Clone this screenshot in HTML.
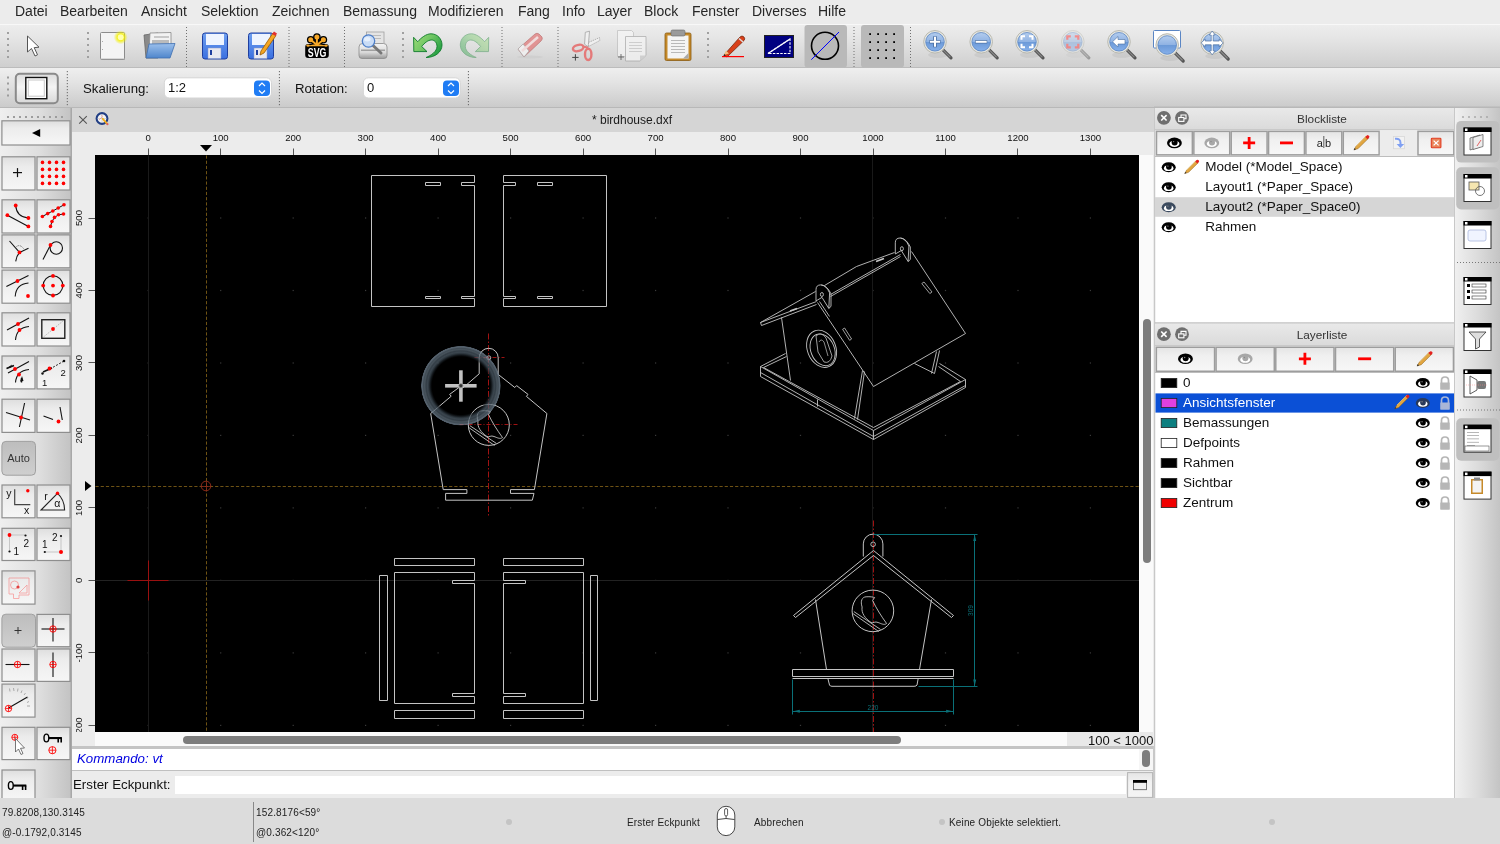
<!DOCTYPE html><html><head><meta charset="utf-8"><style>
*{margin:0;padding:0;box-sizing:border-box}
html,body{width:1500px;height:844px;overflow:hidden;background:#ececec;font-family:"Liberation Sans", sans-serif;position:relative}
.a{position:absolute}
.t{position:absolute;white-space:nowrap;line-height:1;will-change:transform}
svg text{font-family:"Liberation Sans", sans-serif}
svg{will-change:transform}
</style></head><body>
<div class="a" style="left:0;top:0;width:1500px;height:24px;background:#ececec"></div>
<div class="t" style="left:14.5px;top:3.5px;font-size:14px;color:#262626">Datei</div>
<div class="t" style="left:60px;top:3.5px;font-size:14px;color:#262626">Bearbeiten</div>
<div class="t" style="left:141px;top:3.5px;font-size:14px;color:#262626">Ansicht</div>
<div class="t" style="left:201px;top:3.5px;font-size:14px;color:#262626">Selektion</div>
<div class="t" style="left:272px;top:3.5px;font-size:14px;color:#262626">Zeichnen</div>
<div class="t" style="left:343px;top:3.5px;font-size:14px;color:#262626">Bemassung</div>
<div class="t" style="left:428px;top:3.5px;font-size:14px;color:#262626">Modifizieren</div>
<div class="t" style="left:518px;top:3.5px;font-size:14px;color:#262626">Fang</div>
<div class="t" style="left:562px;top:3.5px;font-size:14px;color:#262626">Info</div>
<div class="t" style="left:597px;top:3.5px;font-size:14px;color:#262626">Layer</div>
<div class="t" style="left:644px;top:3.5px;font-size:14px;color:#262626">Block</div>
<div class="t" style="left:692px;top:3.5px;font-size:14px;color:#262626">Fenster</div>
<div class="t" style="left:752px;top:3.5px;font-size:14px;color:#262626">Diverses</div>
<div class="t" style="left:818px;top:3.5px;font-size:14px;color:#262626">Hilfe</div>
<div class="a" style="left:0;top:24px;width:1500px;height:44px;background:linear-gradient(#ededed,#e4e4e4 35%,#cecece);border-top:1px solid #f8f8f8"></div>
<div class="a" style="left:0;top:67px;width:1500px;height:1.3px;background:#bcbcbc"></div>
<div class="a" style="left:0;top:68.3px;width:1500px;height:39px;background:linear-gradient(#efefef,#e4e4e4 35%,#cbcbcb)"></div>
<div class="a" style="left:0;top:106.5px;width:1500px;height:1.5px;background:#b8b8b8"></div>
<svg class="a" style="left:0;top:0" width="1500" height="110" viewBox="0 0 1500 110"><defs>
<linearGradient id="mg" x1="0" y1="0" x2="0" y2="1"><stop offset="0" stop-color="#b4cdee"/><stop offset="0.5" stop-color="#8fb2e3"/><stop offset="0.52" stop-color="#6c9ad8"/><stop offset="1" stop-color="#86b0ea"/></linearGradient>
<linearGradient id="flop" x1="0" y1="0" x2="0" y2="1"><stop offset="0" stop-color="#6fa0f0"/><stop offset="1" stop-color="#3a6fe0"/></linearGradient>
<radialGradient id="glow"><stop offset="0" stop-color="#ffffc0"/><stop offset="0.4" stop-color="#f5f000"/><stop offset="1" stop-color="#f0f000" stop-opacity="0"/></radialGradient>
<linearGradient id="fold" x1="0" y1="0" x2="0" y2="1"><stop offset="0" stop-color="#9cc0ec"/><stop offset="1" stop-color="#4f86cc"/></linearGradient>
<linearGradient id="grn" x1="0" y1="0" x2="1" y2="1"><stop offset="0" stop-color="#6bd06b"/><stop offset="1" stop-color="#1e8a2e"/></linearGradient>
</defs><rect x="7" y="32" width="2" height="2" fill="#a0a0a0"/><rect x="7" y="38" width="2" height="2" fill="#a0a0a0"/><rect x="7" y="44" width="2" height="2" fill="#a0a0a0"/><rect x="7" y="50" width="2" height="2" fill="#a0a0a0"/><rect x="7" y="56" width="2" height="2" fill="#a0a0a0"/><rect x="87" y="32" width="2" height="2" fill="#a0a0a0"/><rect x="87" y="38" width="2" height="2" fill="#a0a0a0"/><rect x="87" y="44" width="2" height="2" fill="#a0a0a0"/><rect x="87" y="50" width="2" height="2" fill="#a0a0a0"/><rect x="87" y="56" width="2" height="2" fill="#a0a0a0"/><rect x="186" y="27" width="1" height="1" fill="#707070"/><rect x="186" y="30" width="1" height="1" fill="#707070"/><rect x="186" y="33" width="1" height="1" fill="#707070"/><rect x="186" y="36" width="1" height="1" fill="#707070"/><rect x="186" y="39" width="1" height="1" fill="#707070"/><rect x="186" y="42" width="1" height="1" fill="#707070"/><rect x="186" y="45" width="1" height="1" fill="#707070"/><rect x="186" y="48" width="1" height="1" fill="#707070"/><rect x="186" y="51" width="1" height="1" fill="#707070"/><rect x="186" y="54" width="1" height="1" fill="#707070"/><rect x="186" y="57" width="1" height="1" fill="#707070"/><rect x="186" y="60" width="1" height="1" fill="#707070"/><rect x="186" y="63" width="1" height="1" fill="#707070"/><rect x="186" y="66" width="1" height="1" fill="#707070"/><rect x="288.5" y="27" width="1" height="1" fill="#707070"/><rect x="288.5" y="30" width="1" height="1" fill="#707070"/><rect x="288.5" y="33" width="1" height="1" fill="#707070"/><rect x="288.5" y="36" width="1" height="1" fill="#707070"/><rect x="288.5" y="39" width="1" height="1" fill="#707070"/><rect x="288.5" y="42" width="1" height="1" fill="#707070"/><rect x="288.5" y="45" width="1" height="1" fill="#707070"/><rect x="288.5" y="48" width="1" height="1" fill="#707070"/><rect x="288.5" y="51" width="1" height="1" fill="#707070"/><rect x="288.5" y="54" width="1" height="1" fill="#707070"/><rect x="288.5" y="57" width="1" height="1" fill="#707070"/><rect x="288.5" y="60" width="1" height="1" fill="#707070"/><rect x="288.5" y="63" width="1" height="1" fill="#707070"/><rect x="288.5" y="66" width="1" height="1" fill="#707070"/><rect x="344" y="27" width="1" height="1" fill="#707070"/><rect x="344" y="30" width="1" height="1" fill="#707070"/><rect x="344" y="33" width="1" height="1" fill="#707070"/><rect x="344" y="36" width="1" height="1" fill="#707070"/><rect x="344" y="39" width="1" height="1" fill="#707070"/><rect x="344" y="42" width="1" height="1" fill="#707070"/><rect x="344" y="45" width="1" height="1" fill="#707070"/><rect x="344" y="48" width="1" height="1" fill="#707070"/><rect x="344" y="51" width="1" height="1" fill="#707070"/><rect x="344" y="54" width="1" height="1" fill="#707070"/><rect x="344" y="57" width="1" height="1" fill="#707070"/><rect x="344" y="60" width="1" height="1" fill="#707070"/><rect x="344" y="63" width="1" height="1" fill="#707070"/><rect x="344" y="66" width="1" height="1" fill="#707070"/><rect x="402" y="32" width="2" height="2" fill="#a0a0a0"/><rect x="402" y="38" width="2" height="2" fill="#a0a0a0"/><rect x="402" y="44" width="2" height="2" fill="#a0a0a0"/><rect x="402" y="50" width="2" height="2" fill="#a0a0a0"/><rect x="402" y="56" width="2" height="2" fill="#a0a0a0"/><rect x="501.5" y="27" width="1" height="1" fill="#707070"/><rect x="501.5" y="30" width="1" height="1" fill="#707070"/><rect x="501.5" y="33" width="1" height="1" fill="#707070"/><rect x="501.5" y="36" width="1" height="1" fill="#707070"/><rect x="501.5" y="39" width="1" height="1" fill="#707070"/><rect x="501.5" y="42" width="1" height="1" fill="#707070"/><rect x="501.5" y="45" width="1" height="1" fill="#707070"/><rect x="501.5" y="48" width="1" height="1" fill="#707070"/><rect x="501.5" y="51" width="1" height="1" fill="#707070"/><rect x="501.5" y="54" width="1" height="1" fill="#707070"/><rect x="501.5" y="57" width="1" height="1" fill="#707070"/><rect x="501.5" y="60" width="1" height="1" fill="#707070"/><rect x="501.5" y="63" width="1" height="1" fill="#707070"/><rect x="501.5" y="66" width="1" height="1" fill="#707070"/><rect x="557.5" y="27" width="1" height="1" fill="#707070"/><rect x="557.5" y="30" width="1" height="1" fill="#707070"/><rect x="557.5" y="33" width="1" height="1" fill="#707070"/><rect x="557.5" y="36" width="1" height="1" fill="#707070"/><rect x="557.5" y="39" width="1" height="1" fill="#707070"/><rect x="557.5" y="42" width="1" height="1" fill="#707070"/><rect x="557.5" y="45" width="1" height="1" fill="#707070"/><rect x="557.5" y="48" width="1" height="1" fill="#707070"/><rect x="557.5" y="51" width="1" height="1" fill="#707070"/><rect x="557.5" y="54" width="1" height="1" fill="#707070"/><rect x="557.5" y="57" width="1" height="1" fill="#707070"/><rect x="557.5" y="60" width="1" height="1" fill="#707070"/><rect x="557.5" y="63" width="1" height="1" fill="#707070"/><rect x="557.5" y="66" width="1" height="1" fill="#707070"/><rect x="707" y="32" width="2" height="2" fill="#a0a0a0"/><rect x="707" y="38" width="2" height="2" fill="#a0a0a0"/><rect x="707" y="44" width="2" height="2" fill="#a0a0a0"/><rect x="707" y="50" width="2" height="2" fill="#a0a0a0"/><rect x="707" y="56" width="2" height="2" fill="#a0a0a0"/><rect x="853.5" y="27" width="1" height="1" fill="#707070"/><rect x="853.5" y="30" width="1" height="1" fill="#707070"/><rect x="853.5" y="33" width="1" height="1" fill="#707070"/><rect x="853.5" y="36" width="1" height="1" fill="#707070"/><rect x="853.5" y="39" width="1" height="1" fill="#707070"/><rect x="853.5" y="42" width="1" height="1" fill="#707070"/><rect x="853.5" y="45" width="1" height="1" fill="#707070"/><rect x="853.5" y="48" width="1" height="1" fill="#707070"/><rect x="853.5" y="51" width="1" height="1" fill="#707070"/><rect x="853.5" y="54" width="1" height="1" fill="#707070"/><rect x="853.5" y="57" width="1" height="1" fill="#707070"/><rect x="853.5" y="60" width="1" height="1" fill="#707070"/><rect x="853.5" y="63" width="1" height="1" fill="#707070"/><rect x="853.5" y="66" width="1" height="1" fill="#707070"/><rect x="910" y="27" width="1" height="1" fill="#707070"/><rect x="910" y="30" width="1" height="1" fill="#707070"/><rect x="910" y="33" width="1" height="1" fill="#707070"/><rect x="910" y="36" width="1" height="1" fill="#707070"/><rect x="910" y="39" width="1" height="1" fill="#707070"/><rect x="910" y="42" width="1" height="1" fill="#707070"/><rect x="910" y="45" width="1" height="1" fill="#707070"/><rect x="910" y="48" width="1" height="1" fill="#707070"/><rect x="910" y="51" width="1" height="1" fill="#707070"/><rect x="910" y="54" width="1" height="1" fill="#707070"/><rect x="910" y="57" width="1" height="1" fill="#707070"/><rect x="910" y="60" width="1" height="1" fill="#707070"/><rect x="910" y="63" width="1" height="1" fill="#707070"/><rect x="910" y="66" width="1" height="1" fill="#707070"/><path d="M27.5,36 L27.5,52 L31.5,48.5 L35,56 L37.5,54.8 L34.2,47.6 L39,47.2 Z" fill="#fff" stroke="#555" stroke-width="1" stroke-linejoin="round"/><rect x="100.5" y="32.5" width="24" height="27" rx="1" fill="#f4f4f4" stroke="#8c8c8c" stroke-width="1"/><rect x="101" y="58.5" width="24" height="1.5" fill="#999" opacity="0.6"/><circle cx="120.7" cy="37.3" r="7" fill="url(#glow)"/><circle cx="120.7" cy="37.3" r="3" fill="#ffffb0"/><rect x="102" y="41" width="1" height="1" fill="#aaa"/><rect x="102" y="49" width="1" height="1" fill="#aaa"/><path d="M144,35 L158,33 L158,58 L146,58 Z" fill="#8a8a8a" stroke="#666" stroke-width="0.8"/><path d="M150,33 L171,32.5 L171,50 L149,52 Z" fill="#f2f2f2" stroke="#888" stroke-width="0.8"/><rect x="154" y="36" width="15" height="2" fill="#c8c8c8"/><rect x="152" y="40" width="17" height="4" fill="#bbb"/><path d="M149,44 L175,43.5 L170,58 L146,58 Z" fill="url(#fold)" stroke="#3f6fb0" stroke-width="0.8"/><rect x="202.5" y="33" width="25" height="26" rx="2.5" fill="url(#flop)" stroke="#1f3fa0" stroke-width="1"/><rect x="206" y="34" width="18" height="11" fill="#eef4ff"/><rect x="208" y="48" width="13" height="10.5" fill="#e8e8f0" stroke="#8a9ac8" stroke-width="0.5"/><rect x="210" y="50" width="2" height="5" fill="#1f3fa0"/><rect x="248.5" y="33" width="25" height="26" rx="2.5" fill="url(#flop)" stroke="#1f3fa0" stroke-width="1"/><rect x="252" y="34" width="18" height="11" fill="#eef4ff"/><rect x="254" y="48" width="13" height="10.5" fill="#e8e8f0" stroke="#8a9ac8" stroke-width="0.5"/><rect x="256" y="50" width="2" height="5" fill="#1f3fa0"/><path d="M261,51 L273,33 L276,35.5 L264,53 L260,55 Z" fill="#f5a623" stroke="#9a5a00" stroke-width="0.8"/><path d="M272,34 L274,31.5 L277,33.5 L275.5,36 Z" fill="#e03030"/><rect x="305.2" y="43.9" width="23.6" height="14" rx="3" fill="#000"/><line x1="316.9" y1="45" x2="310.7" y2="39.7" stroke="#000" stroke-width="4.6" stroke-linecap="round"/><circle cx="310.7" cy="39.7" r="3.8" fill="#000"/><line x1="316.9" y1="45" x2="316.9" y2="37.1" stroke="#000" stroke-width="4.6" stroke-linecap="round"/><circle cx="316.9" cy="37.1" r="3.8" fill="#000"/><line x1="316.9" y1="45" x2="323.4" y2="39.7" stroke="#000" stroke-width="4.6" stroke-linecap="round"/><circle cx="323.4" cy="39.7" r="3.8" fill="#000"/><path d="M306,46.5 Q308,44 312,43.8 L322,43.8 Q326,44 328,46.5 Z" fill="#000"/><line x1="316.9" y1="45" x2="310.7" y2="39.7" stroke="#f6a829" stroke-width="2" stroke-linecap="round"/><circle cx="310.7" cy="39.7" r="2.5" fill="#f6a829"/><line x1="316.9" y1="45" x2="316.9" y2="37.1" stroke="#f6a829" stroke-width="2" stroke-linecap="round"/><circle cx="316.9" cy="37.1" r="2.5" fill="#f6a829"/><line x1="316.9" y1="45" x2="323.4" y2="39.7" stroke="#f6a829" stroke-width="2" stroke-linecap="round"/><circle cx="323.4" cy="39.7" r="2.5" fill="#f6a829"/><path d="M307,46.3 Q310,44.6 316.9,44.3 Q324,44.6 327.5,46.3 Z" fill="#f6a829"/><ellipse cx="308" cy="45.6" rx="1.8" ry="1.1" fill="#f6a829"/><ellipse cx="326" cy="45.6" rx="1.8" ry="1.1" fill="#f6a829"/><text x="317.1" y="56.8" font-family="Liberation Sans" font-weight="bold" font-size="13" fill="#fff" text-anchor="middle" textLength="18.6" lengthAdjust="spacingAndGlyphs">SVG</text><defs><linearGradient id="prn" x1="0" y1="0" x2="0" y2="1"><stop offset="0" stop-color="#f4f4f4"/><stop offset="0.6" stop-color="#d8d8d8"/><stop offset="1" stop-color="#9a9a9a"/></linearGradient></defs><rect x="366.5" y="32" width="17.5" height="15" fill="#e4e4e4" stroke="#a0a0a0" stroke-width="0.8"/><rect x="369" y="35" width="12" height="1" fill="#bbb"/><rect x="369" y="38" width="12" height="1" fill="#bbb"/><path d="M359,47 Q359,43.5 362.5,43.5 L383.5,43.5 Q387,43.5 387,47 L387,55.5 Q387,58.5 384,58.5 L362,58.5 Q359,58.5 359,55.5 Z" fill="url(#prn)" stroke="#8a8a8a" stroke-width="0.8"/><rect x="361" y="49.5" width="24" height="1.5" fill="#777" opacity="0.6"/><line x1="372.5" y1="45" x2="381" y2="53" stroke="#777" stroke-width="3" stroke-linecap="round"/><circle cx="368.5" cy="41" r="6.2" fill="#c9dcf6" stroke="#4e7fc8" stroke-width="1.3"/><ellipse cx="367.3" cy="39.3" rx="3.2" ry="2.2" fill="#eef5ff" opacity="0.8"/><defs><linearGradient id="ug" x1="0" y1="0" x2="1" y2="0.6"><stop offset="0" stop-color="#a0dc78"/><stop offset="0.55" stop-color="#6cc462"/><stop offset="1" stop-color="#26a043"/></linearGradient></defs><path d="M413.6,37.3 L417.7,41.7 C421,38 426,33.8 431,33.8 C437.5,33.8 442,39 442,45 C442,52 435,57.5 426.1,57.5 C431,55.5 437,51.5 437,46.5 C437,42.5 434.5,40 431.5,40 C428,40 424.5,43 421.7,46.5 L427,51.6 L413.8,51.6 Z" fill="url(#ug)" stroke="#0d7a2a" stroke-width="0.9" stroke-linejoin="round"/><g opacity="0.42" transform="translate(902.3,0) scale(-1,1)"><path d="M413.6,37.3 L417.7,41.7 C421,38 426,33.8 431,33.8 C437.5,33.8 442,39 442,45 C442,52 435,57.5 426.1,57.5 C431,55.5 437,51.5 437,46.5 C437,42.5 434.5,40 431.5,40 C428,40 424.5,43 421.7,46.5 L427,51.6 L413.8,51.6 Z" fill="url(#ug)" stroke="#0d7a2a" stroke-width="0.9" stroke-linejoin="round"/></g><g opacity="0.75"><ellipse cx="530" cy="57" rx="13" ry="1.5" fill="#ccc"/><path d="M518,49 L535,34 Q537,32.5 539,34 L542,37 Q543,39 541,41 L524,57 Z" fill="#e07a7a" stroke="#b05050" stroke-width="0.7"/><path d="M518,49 L523,44 L529,51 L524,57 Z" fill="#f4f4f4" stroke="#999" stroke-width="0.7"/><path d="M522,51 L538,37" stroke="#f4dada" stroke-width="2.5"/></g><path d="M585.3,32.3 L589.5,31.2 L588.2,46.8 L584.6,44.2 Z" fill="#f0f0f0" stroke="#9a9a9a" stroke-width="0.7"/><path d="M588.5,42.5 L599.5,37.6 L599.8,40.5 L588.5,46.5 Z" fill="#f0f0f0" stroke="#9a9a9a" stroke-width="0.7" stroke-dasharray="1.5,0.8"/><ellipse cx="578.2" cy="48" rx="5.4" ry="3.0" transform="rotate(-15 578.2 48)" fill="none" stroke="#e47a7a" stroke-width="2.4"/><ellipse cx="588.2" cy="54.4" rx="3.2" ry="5.6" fill="none" stroke="#e47a7a" stroke-width="2.4"/><path d="M583,46.5 L587,47.5 L588,49" fill="none" stroke="#e47a7a" stroke-width="2.2"/><path d="M572.2,57.4 h6.4 M575.4,54.2 v6.4" stroke="#444" stroke-width="1"/><g opacity="0.7"><path d="M617.5,30.5 h14 l2,2 v24 h-16 z" fill="#f6f6f6" stroke="#aaa" stroke-width="0.7"/><path d="M625.5,36.5 h20.5 v19 l-6,5.5 h-14.5 z" fill="#f6f6f6" stroke="#999" stroke-width="0.8"/><path d="M640,61 l6,-5.5 h-6 z" fill="#ccc"/><rect x="629" y="42" width="13" height="0.8" fill="#bbb"/><rect x="629" y="45" width="13" height="0.8" fill="#bbb"/><rect x="629" y="48" width="13" height="0.8" fill="#bbb"/><rect x="629" y="51" width="13" height="0.8" fill="#bbb"/><path d="M618,57 h6 M621,54 v6" stroke="#333" stroke-width="0.9"/></g><rect x="665" y="33" width="26" height="27.5" rx="1.5" fill="#c58a2a" stroke="#8a5a10" stroke-width="0.8"/><rect x="667.5" y="35.5" width="21" height="23" fill="#f4f4f4"/><path d="M683,58.5 l5.5,-5.5 v5.5 z" fill="#aaa"/><rect x="671" y="30" width="14" height="6" rx="1.5" fill="#9a9a9a" stroke="#666" stroke-width="0.6"/><rect x="671" y="40" width="14" height="0.8" fill="#aaa"/><rect x="671" y="43" width="14" height="0.8" fill="#aaa"/><rect x="671" y="46" width="14" height="0.8" fill="#aaa"/><rect x="671" y="49" width="14" height="0.8" fill="#aaa"/><rect x="671" y="52" width="14" height="0.8" fill="#aaa"/><path d="M724,55 L740,37 Q742,35 744,37 Q745.5,39 744,40.5 L727,57 Z" fill="#d9401a" stroke="#7a2a10" stroke-width="0.8"/><path d="M724,55 L726,50.5 L729,53.5 Z" fill="#f0c080"/><path d="M723,56.5 L724.5,54 L725.5,55.5 Z" fill="#222"/><path d="M739,38.5 L743,42" stroke="#ddd" stroke-width="1.5"/><rect x="722" y="56" width="22" height="1.2" fill="#ff0000"/><rect x="764.5" y="35.5" width="29" height="22" fill="#000080" stroke="#222" stroke-width="1"/><path d="M768,53.5 L790,39 L790,53.5 Z" fill="none" stroke="#fff" stroke-width="1.1" stroke-dasharray="2.5,1.2"/><line x1="768" y1="53.5" x2="790" y2="39" stroke="#fff" stroke-width="1.1"/><rect x="804.5" y="25" width="42.5" height="42.5" rx="3" fill="#b9b9b9"/><circle cx="825" cy="45.8" r="13.5" fill="none" stroke="#000" stroke-width="1.6"/><line x1="811.3" y1="59.7" x2="839" y2="32" stroke="#0000ff" stroke-width="1"/><rect x="861" y="25" width="43" height="42.5" rx="3" fill="#b9b9b9"/><rect x="869.2" y="33.2" width="1.8" height="1.8" fill="#000"/><rect x="869.2" y="41.2" width="1.8" height="1.8" fill="#000"/><rect x="869.2" y="49.2" width="1.8" height="1.8" fill="#000"/><rect x="869.2" y="57.2" width="1.8" height="1.8" fill="#000"/><rect x="877.2" y="33.2" width="1.8" height="1.8" fill="#000"/><rect x="877.2" y="41.2" width="1.8" height="1.8" fill="#000"/><rect x="877.2" y="49.2" width="1.8" height="1.8" fill="#000"/><rect x="877.2" y="57.2" width="1.8" height="1.8" fill="#000"/><rect x="885.2" y="33.2" width="1.8" height="1.8" fill="#000"/><rect x="885.2" y="41.2" width="1.8" height="1.8" fill="#000"/><rect x="885.2" y="49.2" width="1.8" height="1.8" fill="#000"/><rect x="885.2" y="57.2" width="1.8" height="1.8" fill="#000"/><rect x="893.2" y="33.2" width="1.8" height="1.8" fill="#000"/><rect x="893.2" y="41.2" width="1.8" height="1.8" fill="#000"/><rect x="893.2" y="49.2" width="1.8" height="1.8" fill="#000"/><rect x="893.2" y="57.2" width="1.8" height="1.8" fill="#000"/><g>
<ellipse cx="938" cy="54.8" rx="10" ry="3" fill="#000" opacity="0.06"/>
<line x1="943" y1="49.8" x2="951" y2="57.8" stroke="#555" stroke-width="3.2" stroke-linecap="round"/>
<line x1="943" y1="49.8" x2="950" y2="56.8" stroke="#8a8a8a" stroke-width="1.2" stroke-linecap="round"/>
<circle cx="935" cy="41.8" r="11.3" fill="#e6e6e0" stroke="#b9b9b0" stroke-width="1"/>
<circle cx="935" cy="41.8" r="9.3" fill="url(#mg)" stroke="#5b86c4" stroke-width="0.8"/>
<path d="M929.5,41.8 h11 M935,36.3 v11" stroke="#4a6ea0" stroke-width="3.6"/><path d="M930,41.8 h10 M935,36.8 v10" stroke="#fff" stroke-width="2"/>
</g><g>
<ellipse cx="984.2" cy="54.8" rx="10" ry="3" fill="#000" opacity="0.06"/>
<line x1="989.2" y1="49.8" x2="997.2" y2="57.8" stroke="#555" stroke-width="3.2" stroke-linecap="round"/>
<line x1="989.2" y1="49.8" x2="996.2" y2="56.8" stroke="#8a8a8a" stroke-width="1.2" stroke-linecap="round"/>
<circle cx="981.2" cy="41.8" r="11.3" fill="#e6e6e0" stroke="#b9b9b0" stroke-width="1"/>
<circle cx="981.2" cy="41.8" r="9.3" fill="url(#mg)" stroke="#5b86c4" stroke-width="0.8"/>
<path d="M975.2,41.8 h12" stroke="#4a6ea0" stroke-width="3.4"/><path d="M975.7,41.8 h11" stroke="#fff" stroke-width="2"/>
</g><g>
<ellipse cx="1030" cy="54.8" rx="10" ry="3" fill="#000" opacity="0.06"/>
<line x1="1035" y1="49.8" x2="1043" y2="57.8" stroke="#555" stroke-width="3.2" stroke-linecap="round"/>
<line x1="1035" y1="49.8" x2="1042" y2="56.8" stroke="#8a8a8a" stroke-width="1.2" stroke-linecap="round"/>
<circle cx="1027" cy="41.8" r="11.3" fill="#e6e6e0" stroke="#b9b9b0" stroke-width="1"/>
<circle cx="1027" cy="41.8" r="9.3" fill="url(#mg)" stroke="#5b86c4" stroke-width="0.8"/>
<path d="M1021.5,39.8 v-3.5 h3.5 M1029,36.3 h3.5 v3.5 M1032.5,43.8 v3.5 h-3.5 M1025,47.3 h-3.5 v-3.5" fill="none" stroke="#fff" stroke-width="2"/>
</g><g opacity="0.45">
<ellipse cx="1075.8" cy="54.8" rx="10" ry="3" fill="#000" opacity="0.06"/>
<line x1="1080.8" y1="49.8" x2="1088.8" y2="57.8" stroke="#555" stroke-width="3.2" stroke-linecap="round"/>
<line x1="1080.8" y1="49.8" x2="1087.8" y2="56.8" stroke="#8a8a8a" stroke-width="1.2" stroke-linecap="round"/>
<circle cx="1072.8" cy="41.8" r="11.3" fill="#e6e6e0" stroke="#b9b9b0" stroke-width="1"/>
<circle cx="1072.8" cy="41.8" r="9.3" fill="url(#mg)" stroke="#5b86c4" stroke-width="0.8"/>
<path d="M1067.3,39.8 v-3.5 h3.5 M1074.8,36.3 h3.5 v3.5 M1078.3,43.8 v3.5 h-3.5 M1070.8,47.3 h-3.5 v-3.5" fill="none" stroke="#ff2020" stroke-width="2.2"/>
</g><g>
<ellipse cx="1122" cy="54.8" rx="10" ry="3" fill="#000" opacity="0.06"/>
<line x1="1127" y1="49.8" x2="1135" y2="57.8" stroke="#555" stroke-width="3.2" stroke-linecap="round"/>
<line x1="1127" y1="49.8" x2="1134" y2="56.8" stroke="#8a8a8a" stroke-width="1.2" stroke-linecap="round"/>
<circle cx="1119" cy="41.8" r="11.3" fill="#e6e6e0" stroke="#b9b9b0" stroke-width="1"/>
<circle cx="1119" cy="41.8" r="9.3" fill="url(#mg)" stroke="#5b86c4" stroke-width="0.8"/>
<path d="M1112.5,41.8 L1118,36.5 L1118,39.5 L1125,39.5 L1125,44 L1118,44 L1118,47 Z" fill="#fff" stroke="#4a6ea0" stroke-width="0.6"/>
</g><rect x="1153.5" y="30.5" width="27" height="17.5" rx="1" fill="#fff" stroke="#5b86c4" stroke-width="1"/><g>
<ellipse cx="1170.2" cy="58" rx="10" ry="3" fill="#000" opacity="0.06"/>
<line x1="1175.2" y1="53" x2="1183.2" y2="61" stroke="#555" stroke-width="3.2" stroke-linecap="round"/>
<line x1="1175.2" y1="53" x2="1182.2" y2="60" stroke="#8a8a8a" stroke-width="1.2" stroke-linecap="round"/>
<circle cx="1167.2" cy="45" r="11.3" fill="#e6e6e0" stroke="#b9b9b0" stroke-width="1"/>
<circle cx="1167.2" cy="45" r="9.3" fill="url(#mg)" stroke="#5b86c4" stroke-width="0.8"/>

</g><g>
<ellipse cx="1215.2" cy="56" rx="10" ry="3" fill="#000" opacity="0.06"/>
<line x1="1220.2" y1="51" x2="1228.2" y2="59" stroke="#555" stroke-width="3.2" stroke-linecap="round"/>
<line x1="1220.2" y1="51" x2="1227.2" y2="58" stroke="#8a8a8a" stroke-width="1.2" stroke-linecap="round"/>
<circle cx="1212.2" cy="43" r="11.3" fill="#e6e6e0" stroke="#b9b9b0" stroke-width="1"/>
<circle cx="1212.2" cy="43" r="9.3" fill="url(#mg)" stroke="#5b86c4" stroke-width="0.8"/>
<path d="M1212.2,31 l-3,4 h2 v6 h-6 v-2 l-4,3.9 l4,3.9 v-2 h6 v6 h-2 l3,4 l3,-4 h-2 v-6 h6 v2 l4,-3.9 l-4,-3.9 v2 h-6 v-6 h2 z" fill="#fff" stroke="#4a6ea0" stroke-width="0.7"/>
</g></svg>
<svg class="a" style="left:0;top:68px" width="500" height="40" viewBox="0 68 500 40"><defs><linearGradient id="tb2b" x1="0" y1="0" x2="0" y2="1"><stop offset="0" stop-color="#dcdcdc"/><stop offset="0.45" stop-color="#f4f4f4"/><stop offset="1" stop-color="#d8d8d8"/></linearGradient></defs><rect x="7" y="76.5" width="2" height="2" fill="#9c9c9c"/><rect x="7" y="82.5" width="2" height="2" fill="#9c9c9c"/><rect x="7" y="88.5" width="2" height="2" fill="#9c9c9c"/><rect x="7" y="94.5" width="2" height="2" fill="#9c9c9c"/><rect x="15.8" y="73.7" width="42" height="29.6" rx="4" fill="url(#tb2b)" stroke="#8a8a8a" stroke-width="2"/><rect x="25.8" y="77.5" width="21" height="21.2" fill="#fff" stroke="#111" stroke-width="1.4"/><rect x="28.3" y="80" width="16" height="16.2" fill="#fff" stroke="#c8c8c8" stroke-width="1"/><rect x="66.8" y="71" width="1" height="1.2" fill="#666"/><rect x="66.8" y="74" width="1" height="1.2" fill="#666"/><rect x="66.8" y="77" width="1" height="1.2" fill="#666"/><rect x="66.8" y="80" width="1" height="1.2" fill="#666"/><rect x="66.8" y="83" width="1" height="1.2" fill="#666"/><rect x="66.8" y="86" width="1" height="1.2" fill="#666"/><rect x="66.8" y="89" width="1" height="1.2" fill="#666"/><rect x="66.8" y="92" width="1" height="1.2" fill="#666"/><rect x="66.8" y="95" width="1" height="1.2" fill="#666"/><rect x="66.8" y="98" width="1" height="1.2" fill="#666"/><rect x="66.8" y="101" width="1" height="1.2" fill="#666"/><rect x="66.8" y="104" width="1" height="1.2" fill="#666"/><rect x="278.9" y="71" width="1" height="1.2" fill="#666"/><rect x="278.9" y="74" width="1" height="1.2" fill="#666"/><rect x="278.9" y="77" width="1" height="1.2" fill="#666"/><rect x="278.9" y="80" width="1" height="1.2" fill="#666"/><rect x="278.9" y="83" width="1" height="1.2" fill="#666"/><rect x="278.9" y="86" width="1" height="1.2" fill="#666"/><rect x="278.9" y="89" width="1" height="1.2" fill="#666"/><rect x="278.9" y="92" width="1" height="1.2" fill="#666"/><rect x="278.9" y="95" width="1" height="1.2" fill="#666"/><rect x="278.9" y="98" width="1" height="1.2" fill="#666"/><rect x="278.9" y="101" width="1" height="1.2" fill="#666"/><rect x="278.9" y="104" width="1" height="1.2" fill="#666"/><rect x="467.9" y="71" width="1" height="1.2" fill="#666"/><rect x="467.9" y="74" width="1" height="1.2" fill="#666"/><rect x="467.9" y="77" width="1" height="1.2" fill="#666"/><rect x="467.9" y="80" width="1" height="1.2" fill="#666"/><rect x="467.9" y="83" width="1" height="1.2" fill="#666"/><rect x="467.9" y="86" width="1" height="1.2" fill="#666"/><rect x="467.9" y="89" width="1" height="1.2" fill="#666"/><rect x="467.9" y="92" width="1" height="1.2" fill="#666"/><rect x="467.9" y="95" width="1" height="1.2" fill="#666"/><rect x="467.9" y="98" width="1" height="1.2" fill="#666"/><rect x="467.9" y="101" width="1" height="1.2" fill="#666"/><rect x="467.9" y="104" width="1" height="1.2" fill="#666"/><rect x="164.3" y="77.8" width="107.19999999999999" height="20.2" rx="5" fill="#fff" stroke="#d4d4d4" stroke-width="1"/><rect x="254" y="80.5" width="16" height="15.5" rx="4" fill="#1f7cf4"/><path d="M259,86 L262,83 L265,86 M259,90.5 L262,93.5 L265,90.5" fill="none" stroke="#fff" stroke-width="1.2"/><rect x="363.3" y="77.8" width="97.0" height="20.2" rx="5" fill="#fff" stroke="#d4d4d4" stroke-width="1"/><rect x="443" y="80.5" width="16" height="15.5" rx="4" fill="#1f7cf4"/><path d="M448,86 L451,83 L454,86 M448,90.5 L451,93.5 L454,90.5" fill="none" stroke="#fff" stroke-width="1.2"/></svg><div class="t" style="left:83.2px;top:82.3px;font-size:13.2px;color:#111">Skalierung:</div><div class="t" style="left:168px;top:80.5px;font-size:13px;color:#111">1:2</div><div class="t" style="left:295.4px;top:82.3px;font-size:13.2px;color:#111">Rotation:</div><div class="t" style="left:367.2px;top:80.5px;font-size:13px;color:#111">0</div>
<svg class="a" style="left:0;top:108px" width="72" height="690" viewBox="0 108 72 690"><defs>
<linearGradient id="ltbg" x1="0" y1="0" x2="1" y2="0"><stop offset="0" stop-color="#efefef"/><stop offset="0.55" stop-color="#dedede"/><stop offset="1" stop-color="#c2c2c2"/></linearGradient>
<linearGradient id="ltb" x1="0" y1="0" x2="0" y2="1"><stop offset="0" stop-color="#dedede"/><stop offset="0.3" stop-color="#ececec"/><stop offset="1" stop-color="#f6f6f6"/></linearGradient>
<linearGradient id="ltp" x1="0" y1="0" x2="0" y2="1"><stop offset="0" stop-color="#bdbdbd"/><stop offset="1" stop-color="#cfcfcf"/></linearGradient>
</defs><rect x="0" y="108" width="72" height="690" fill="url(#ltbg)"/><rect x="70.5" y="108" width="1.5" height="690" fill="#a8a8a8"/><rect x="7" y="116" width="2" height="2" fill="#9c9c9c"/><rect x="13" y="116" width="2" height="2" fill="#9c9c9c"/><rect x="19" y="116" width="2" height="2" fill="#9c9c9c"/><rect x="25" y="116" width="2" height="2" fill="#9c9c9c"/><rect x="31" y="116" width="2" height="2" fill="#9c9c9c"/><rect x="37" y="116" width="2" height="2" fill="#9c9c9c"/><rect x="43" y="116" width="2" height="2" fill="#9c9c9c"/><rect x="49" y="116" width="2" height="2" fill="#9c9c9c"/><rect x="55" y="116" width="2" height="2" fill="#9c9c9c"/><rect x="61" y="116" width="2" height="2" fill="#9c9c9c"/><rect x="1.9" y="120.8" width="68.1" height="24.199999999999992" fill="url(#ltb)" stroke="#8e8e8e" stroke-width="1.2"/><path d="M32,133 L40.2,129 L40.2,137 Z" fill="#000"/><rect x="2.0" y="156.79999999999998" width="33.0" height="33.2" fill="url(#ltb)" stroke="#8e8e8e" stroke-width="1.2"/><line x1="13" y1="172.6" x2="22" y2="172.6" stroke="#111" stroke-width="1.2" /><line x1="17.5" y1="168.1" x2="17.5" y2="177.1" stroke="#111" stroke-width="1.2" /><rect x="37.0" y="156.79999999999998" width="32.99999999999999" height="33.2" fill="url(#ltb)" stroke="#8e8e8e" stroke-width="1.2"/><circle cx="42.5" cy="162.4" r="1.8" fill="#ff0000"/><circle cx="42.5" cy="169.4" r="1.8" fill="#ff0000"/><circle cx="42.5" cy="176.4" r="1.8" fill="#ff0000"/><circle cx="42.5" cy="183.4" r="1.8" fill="#ff0000"/><circle cx="49.5" cy="162.4" r="1.8" fill="#ff0000"/><circle cx="49.5" cy="169.4" r="1.8" fill="#ff0000"/><circle cx="49.5" cy="176.4" r="1.8" fill="#ff0000"/><circle cx="49.5" cy="183.4" r="1.8" fill="#ff0000"/><circle cx="56.5" cy="162.4" r="1.8" fill="#ff0000"/><circle cx="56.5" cy="169.4" r="1.8" fill="#ff0000"/><circle cx="56.5" cy="176.4" r="1.8" fill="#ff0000"/><circle cx="56.5" cy="183.4" r="1.8" fill="#ff0000"/><circle cx="63.5" cy="162.4" r="1.8" fill="#ff0000"/><circle cx="63.5" cy="169.4" r="1.8" fill="#ff0000"/><circle cx="63.5" cy="176.4" r="1.8" fill="#ff0000"/><circle cx="63.5" cy="183.4" r="1.8" fill="#ff0000"/><rect x="2.0" y="199.79999999999998" width="33.0" height="33.2" fill="url(#ltb)" stroke="#8e8e8e" stroke-width="1.2"/><line x1="7.4" y1="215.2" x2="28.4" y2="226.4" stroke="#111" stroke-width="1.1" /><path d="M15.7,205.5 Q16.5,217 28.4,218" fill="none" stroke="#111" stroke-width="1.1"/><circle cx="15.7" cy="205.5" r="1.9" fill="#ff0000"/><circle cx="7.4" cy="215.2" r="1.9" fill="#ff0000"/><circle cx="28.4" cy="218" r="1.9" fill="#ff0000"/><circle cx="28.4" cy="226.4" r="1.9" fill="#ff0000"/><rect x="37.0" y="199.79999999999998" width="32.99999999999999" height="33.2" fill="url(#ltb)" stroke="#8e8e8e" stroke-width="1.2"/><polyline points="42.4,216.5 47.7,213.6 52.8,211 58.2,208 64,204.8" fill="none" stroke="#111" stroke-width="1"/><polyline points="50.5,226.4 52,221.5 54.5,217.4 58.5,214.8 63.5,214" fill="none" stroke="#111" stroke-width="1"/><circle cx="42.4" cy="216.5" r="1.8" fill="#ff0000"/><circle cx="47.7" cy="213.6" r="1.8" fill="#ff0000"/><circle cx="52.8" cy="211" r="1.8" fill="#ff0000"/><circle cx="58.2" cy="208" r="1.8" fill="#ff0000"/><circle cx="64" cy="204.8" r="1.8" fill="#ff0000"/><circle cx="54.5" cy="217.4" r="1.8" fill="#ff0000"/><circle cx="58.5" cy="214.8" r="1.8" fill="#ff0000"/><circle cx="63.5" cy="214" r="1.8" fill="#ff0000"/><circle cx="52" cy="221.5" r="1.8" fill="#ff0000"/><circle cx="50.5" cy="226.4" r="1.8" fill="#ff0000"/><rect x="2.0" y="234.9" width="33.0" height="32.89999999999996" fill="url(#ltb)" stroke="#8e8e8e" stroke-width="1.2"/><line x1="9.5" y1="241" x2="19.5" y2="252.4" stroke="#111" stroke-width="1.1" /><line x1="19.5" y1="252.4" x2="28.5" y2="248.3" stroke="#111" stroke-width="1.1" /><path d="M19.5,252.4 Q16.5,256 15.7,261.3" fill="none" stroke="#111" stroke-width="1.1"/><path d="M16.5,246.5 Q20,244 23.5,248.5" fill="none" stroke="#111" stroke-width="0.6" stroke-dasharray="1,0.8"/><circle cx="19.5" cy="252.4" r="1.9" fill="#ff0000"/><rect x="37.0" y="234.9" width="32.99999999999999" height="32.89999999999996" fill="url(#ltb)" stroke="#8e8e8e" stroke-width="1.2"/><circle cx="56.3" cy="248" r="6.2" fill="none" stroke="#111" stroke-width="1.1"/><line x1="43" y1="259.4" x2="50.5" y2="245" stroke="#111" stroke-width="1.1" /><circle cx="50.5" cy="245" r="1.9" fill="#ff0000"/><rect x="2.0" y="270.1" width="33.0" height="33.10000000000001" fill="url(#ltb)" stroke="#8e8e8e" stroke-width="1.2"/><line x1="6.4" y1="286.5" x2="28.5" y2="275.4" stroke="#111" stroke-width="1.1" /><circle cx="17.5" cy="281" r="1.9" fill="#ff0000"/><path d="M15.2,296.5 Q16,284 28.5,283" fill="none" stroke="#111" stroke-width="1.1"/><circle cx="28" cy="296" r="1.9" fill="#ff0000"/><rect x="37.0" y="270.1" width="32.99999999999999" height="33.10000000000001" fill="url(#ltb)" stroke="#8e8e8e" stroke-width="1.2"/><circle cx="53" cy="285.6" r="9.8" fill="none" stroke="#111" stroke-width="1.1"/><circle cx="53" cy="275.9" r="1.9" fill="#ff0000"/><circle cx="43.2" cy="285.6" r="1.9" fill="#ff0000"/><circle cx="62.8" cy="285.6" r="1.9" fill="#ff0000"/><circle cx="53" cy="295.5" r="1.9" fill="#ff0000"/><circle cx="53" cy="285.6" r="1.9" fill="#ff0000"/><rect x="2.0" y="312.8" width="33.0" height="33.20000000000003" fill="url(#ltb)" stroke="#8e8e8e" stroke-width="1.2"/><line x1="7" y1="330" x2="29" y2="318" stroke="#111" stroke-width="1.1" /><circle cx="18" cy="324" r="1.9" fill="#ff0000"/><path d="M15.5,340 Q16.5,327.5 29,326.5" fill="none" stroke="#111" stroke-width="1.1"/><circle cx="19.5" cy="330" r="1.9" fill="#ff0000"/><rect x="37.0" y="312.8" width="32.99999999999999" height="33.20000000000003" fill="url(#ltb)" stroke="#8e8e8e" stroke-width="1.2"/><rect x="41.8" y="319.7" width="23" height="18.6" fill="none" stroke="#222" stroke-width="1.4"/><line x1="43.5" y1="337" x2="63" y2="321" stroke="#999" stroke-width="0.7" stroke-dasharray="1.5,1.2"/><circle cx="53" cy="329" r="1.9" fill="#ff0000"/><rect x="2.0" y="356.0" width="33.0" height="32.90000000000002" fill="url(#ltb)" stroke="#8e8e8e" stroke-width="1.2"/><line x1="8" y1="373" x2="29" y2="361.5" stroke="#111" stroke-width="1.1" /><path d="M15.5,382.5 Q16.5,370.5 29,369.5" fill="none" stroke="#111" stroke-width="1.1"/><path d="M6.5,368.5 L12,364.5 L11,367.5 Z" fill="#111"/><line x1="6.5" y1="368.5" x2="14" y2="365.5" stroke="#111" stroke-width="1.6" /><path d="M20,381.5 L22,376 L23.5,381 Z" fill="#111"/><line x1="21.5" y1="378" x2="21.5" y2="382.5" stroke="#111" stroke-width="1.4" /><circle cx="15" cy="369" r="1.9" fill="#ff0000"/><circle cx="19" cy="374.5" r="1.9" fill="#ff0000"/><rect x="37.0" y="356.0" width="32.99999999999999" height="32.90000000000002" fill="url(#ltb)" stroke="#8e8e8e" stroke-width="1.2"/><line x1="43" y1="372" x2="52" y2="368" stroke="#111" stroke-width="1.6" /><line x1="50" y1="369" x2="64" y2="361" stroke="#111" stroke-width="0.9" stroke-dasharray="2,1.5"/><circle cx="64" cy="361" r="1.3" fill="#111"/><circle cx="42.5" cy="373.5" r="1.2" fill="#111"/><circle cx="49.5" cy="368.5" r="1.9" fill="#ff0000"/><text x="42" y="386" font-family="Liberation Sans" font-size="9.5" fill="#111">1</text><text x="60.5" y="375.5" font-family="Liberation Sans" font-size="9.5" fill="#111">2</text><rect x="2.0" y="399.20000000000005" width="33.0" height="33.199999999999974" fill="url(#ltb)" stroke="#8e8e8e" stroke-width="1.2"/><line x1="6" y1="412.5" x2="30" y2="420" stroke="#111" stroke-width="1.1" /><line x1="24.6" y1="403" x2="19.4" y2="427" stroke="#111" stroke-width="1.1" /><circle cx="21" cy="417.5" r="1.9" fill="#ff0000"/><rect x="37.0" y="399.20000000000005" width="32.99999999999999" height="33.199999999999974" fill="url(#ltb)" stroke="#8e8e8e" stroke-width="1.2"/><line x1="43.5" y1="416" x2="53" y2="419.5" stroke="#111" stroke-width="1.1" /><line x1="60" y1="407" x2="62.3" y2="420" stroke="#111" stroke-width="1.1" /><circle cx="58.5" cy="421.5" r="1.9" fill="#ff0000"/><rect x="1.9" y="441.4" width="33.6" height="33.8" rx="4" fill="url(#ltp)" stroke="#a0a0a0" stroke-width="1"/><text x="18.6" y="462.2" font-family="Liberation Sans" font-size="11" fill="#333" text-anchor="middle">Auto</text><rect x="2.0" y="485.0" width="33.0" height="32.8" fill="url(#ltb)" stroke="#8e8e8e" stroke-width="1.2"/><path d="M14.7,489.3 V504.6 H30.3" fill="none" stroke="#444" stroke-width="1.2"/><circle cx="27.8" cy="490.8" r="1.7" fill="#ff0000"/><text x="6.3" y="496.5" font-family="Liberation Sans" font-size="10.5" fill="#111">y</text><text x="24" y="513.5" font-family="Liberation Sans" font-size="10.5" fill="#111">x</text><rect x="37.0" y="485.0" width="32.99999999999999" height="32.8" fill="url(#ltb)" stroke="#8e8e8e" stroke-width="1.2"/><path d="M57.5,493.3 L41,510 H64.6 Q64.5,499.5 57.5,493.3" fill="none" stroke="#222" stroke-width="1.1"/><circle cx="57.5" cy="493.3" r="1.7" fill="#ff0000"/><text x="44.3" y="500" font-family="Liberation Sans" font-size="10.5" fill="#111">r</text><text x="54.2" y="507" font-family="Liberation Sans" font-size="10.5" fill="#111">α</text><rect x="2.0" y="528.3000000000001" width="33.0" height="32.199999999999974" fill="url(#ltb)" stroke="#8e8e8e" stroke-width="1.2"/><path d="M9.5,535 H25.5 M9.5,535 V551.5" fill="none" stroke="#bbb" stroke-width="0.8"/><circle cx="9.5" cy="535" r="1.9" fill="#ff0000"/><circle cx="25.5" cy="535.5" r="1.1" fill="#111"/><circle cx="9.5" cy="551.5" r="1.1" fill="#111"/><text x="13.5" y="554.5" font-family="Liberation Sans" font-size="10" fill="#111">1</text><text x="23.6" y="546.5" font-family="Liberation Sans" font-size="10" fill="#111">2</text><rect x="37.0" y="528.3000000000001" width="32.99999999999999" height="32.199999999999974" fill="url(#ltb)" stroke="#8e8e8e" stroke-width="1.2"/><path d="M45,552 H61 M61,536 V552" fill="none" stroke="#bbb" stroke-width="0.8"/><circle cx="61" cy="552" r="2" fill="#ff0000"/><circle cx="61" cy="536" r="1.1" fill="#111"/><circle cx="44.8" cy="552" r="1.1" fill="#111"/><text x="42" y="548" font-family="Liberation Sans" font-size="10" fill="#111">1</text><text x="52" y="541" font-family="Liberation Sans" font-size="10" fill="#111">2</text><rect x="2.0" y="570.9" width="33.0" height="33.20000000000009" fill="url(#ltb)" stroke="#8e8e8e" stroke-width="1.2"/><g opacity="0.35"><path d="M9,578 H29 V595 H19 V598.5 H13.5 V594 H9 Z" fill="none" stroke="#ff0000" stroke-width="0.8"/><circle cx="14.5" cy="585" r="4" fill="none" stroke="#ff0000" stroke-width="0.8"/><path d="M19,593 L27,585 V593 Z" fill="none" stroke="#ff0000" stroke-width="0.8"/></g><circle cx="18" cy="587" r="1.6" fill="#e04040"/><rect x="1.9" y="614.2" width="33.6" height="33" rx="4" fill="url(#ltp)" stroke="#a0a0a0" stroke-width="1"/><line x1="14.5" y1="630.5" x2="21.5" y2="630.5" stroke="#333" stroke-width="1" /><line x1="18" y1="627" x2="18" y2="634" stroke="#333" stroke-width="1" /><rect x="37.0" y="614.4" width="32.99999999999999" height="32.3" fill="url(#ltb)" stroke="#8e8e8e" stroke-width="1.2"/><line x1="41.5" y1="629" x2="64.5" y2="629" stroke="#111" stroke-width="1.1" /><line x1="53" y1="618" x2="53" y2="641.5" stroke="#111" stroke-width="1.1" /><circle cx="53" cy="629" r="3.2" fill="none" stroke="#ff0000" stroke-width="0.9"/><line x1="49.8" y1="629" x2="56.2" y2="629" stroke="#ff0000" stroke-width="0.8" /><line x1="53" y1="625.8" x2="53" y2="632.2" stroke="#ff0000" stroke-width="0.8" /><rect x="2.0" y="649.0" width="33.0" height="32.40000000000002" fill="url(#ltb)" stroke="#8e8e8e" stroke-width="1.2"/><line x1="5.5" y1="664.5" x2="29.5" y2="664.5" stroke="#111" stroke-width="1.1" /><circle cx="17.5" cy="664.5" r="3.2" fill="none" stroke="#ff0000" stroke-width="0.9"/><line x1="14.3" y1="664.5" x2="20.7" y2="664.5" stroke="#ff0000" stroke-width="0.8" /><line x1="17.5" y1="661.3" x2="17.5" y2="667.7" stroke="#ff0000" stroke-width="0.8" /><rect x="37.0" y="649.0" width="32.99999999999999" height="32.40000000000002" fill="url(#ltb)" stroke="#8e8e8e" stroke-width="1.2"/><line x1="53" y1="652.5" x2="53" y2="677" stroke="#111" stroke-width="1.1" /><circle cx="53" cy="664.5" r="3.2" fill="none" stroke="#ff0000" stroke-width="0.9"/><line x1="49.8" y1="664.5" x2="56.2" y2="664.5" stroke="#ff0000" stroke-width="0.8" /><line x1="53" y1="661.3" x2="53" y2="667.7" stroke="#ff0000" stroke-width="0.8" /><rect x="2.0" y="684.1" width="33.0" height="33.00000000000004" fill="url(#ltb)" stroke="#8e8e8e" stroke-width="1.2"/><line x1="8.5" y1="708" x2="27.5" y2="697" stroke="#111" stroke-width="1.1" /><circle cx="8.5" cy="708.5" r="3.2" fill="none" stroke="#ff0000" stroke-width="0.9"/><line x1="5.3" y1="708.5" x2="11.7" y2="708.5" stroke="#ff0000" stroke-width="0.8" /><line x1="8.5" y1="705.3" x2="8.5" y2="711.7" stroke="#ff0000" stroke-width="0.8" /><line x1="9.5" y1="688.5" x2="10" y2="691.5" stroke="#999" stroke-width="0.8" /><line x1="13.5" y1="688" x2="14" y2="691" stroke="#999" stroke-width="0.8" /><line x1="18" y1="688.5" x2="17.5" y2="691.5" stroke="#999" stroke-width="0.8" /><line x1="22" y1="690.5" x2="21" y2="693" stroke="#999" stroke-width="0.8" /><line x1="25.5" y1="693" x2="24" y2="695" stroke="#999" stroke-width="0.8" /><line x1="28" y1="697.5" x2="26.5" y2="699" stroke="#999" stroke-width="0.8" /><line x1="29" y1="701.5" x2="27" y2="702.5" stroke="#999" stroke-width="0.8" /><line x1="30" y1="706" x2="27" y2="706" stroke="#999" stroke-width="0.8" /><rect x="2.0" y="727.3000000000001" width="33.0" height="32.3" fill="url(#ltb)" stroke="#8e8e8e" stroke-width="1.2"/><circle cx="14.8" cy="737.3" r="3" fill="none" stroke="#ff0000" stroke-width="0.9"/><line x1="11.8" y1="737.3" x2="17.8" y2="737.3" stroke="#ff0000" stroke-width="0.8" /><line x1="14.8" y1="734.3" x2="14.8" y2="740.3" stroke="#ff0000" stroke-width="0.8" /><path d="M15.5,738.5 V752 L18.5,749 L21,754.5 L23,753.5 L20.5,748.3 L24.5,748 Z" fill="#fff" stroke="#555" stroke-width="0.8"/><rect x="37.0" y="727.3000000000001" width="32.99999999999999" height="32.3" fill="url(#ltb)" stroke="#8e8e8e" stroke-width="1.2"/><ellipse cx="46.4" cy="738" rx="2.4" ry="3.9" fill="none" stroke="#000" stroke-width="1.4"/><rect x="48.699999999999996" y="737" width="13.2" height="2.1" fill="#000"/><rect x="57.4" y="738" width="1.6" height="4.5" fill="#000"/><rect x="60.4" y="738" width="1.6" height="4.5" fill="#000"/><circle cx="52.4" cy="750.2" r="3.6" fill="none" stroke="#ff0000" stroke-width="0.9"/><line x1="48.8" y1="750.2" x2="56.0" y2="750.2" stroke="#ff0000" stroke-width="0.8" /><line x1="52.4" y1="746.6" x2="52.4" y2="753.8000000000001" stroke="#ff0000" stroke-width="0.8" /><rect x="2.0" y="770.0" width="33.0" height="29.400000000000023" fill="url(#ltb)" stroke="#8e8e8e" stroke-width="1.2"/><ellipse cx="10.8" cy="785.5" rx="2.4" ry="3.9" fill="none" stroke="#000" stroke-width="1.4"/><rect x="13.100000000000001" y="784.5" width="13.2" height="2.1" fill="#000"/><rect x="21.8" y="785.5" width="1.6" height="4.5" fill="#000"/><rect x="24.8" y="785.5" width="1.6" height="4.5" fill="#000"/></svg>
<div class="a" style="left:72px;top:106.5px;width:1082px;height:1.5px;background:#b8b8b8"></div><div class="a" style="left:72px;top:108px;width:1082px;height:24px;background:#d5d5d5"></div><div class="t" style="left:592px;top:113.5px;font-size:12px;color:#1a1a1a">* birdhouse.dxf</div><svg class="a" style="left:72px;top:108px" width="50" height="24" viewBox="72 108 50 24">
<path d="M79.2,116.1 L86.8,123.6 M86.8,116.1 L79.2,123.6" stroke="#555" stroke-width="1.1"/>
<circle cx="102" cy="118.5" r="5.4" fill="#f4f4f4" stroke="#223f85" stroke-width="2.1"/>
<path d="M97.5,118.5 h9 M102,114 v9" stroke="#bbb" stroke-width="0.5"/>
<path d="M99,120 l3,-3 M101,115.5 l2,1" stroke="#e07070" stroke-width="0.5"/>
<path d="M102.8,118.8 L107,123.6" stroke="#f0b020" stroke-width="1.9" stroke-linecap="round"/>
<circle cx="107.4" cy="124.2" r="1.1" fill="#e06060"/>
</svg>
<svg class="a" style="left:72px;top:132px" width="1082" height="23" viewBox="72 132 1082 23"><rect x="72" y="132" width="1082" height="23" fill="#ececec"/><line x1="148.50" y1="148.50" x2="148.50" y2="155.50" stroke="#555" stroke-width="1" /><text x="148.2" y="141.3" font-family="Liberation Sans" font-size="9.6" fill="#111" text-anchor="middle">0</text><line x1="220.50" y1="148.50" x2="220.50" y2="155.50" stroke="#555" stroke-width="1" /><text x="220.7" y="141.3" font-family="Liberation Sans" font-size="9.6" fill="#111" text-anchor="middle">100</text><line x1="293.50" y1="148.50" x2="293.50" y2="155.50" stroke="#555" stroke-width="1" /><text x="293.2" y="141.3" font-family="Liberation Sans" font-size="9.6" fill="#111" text-anchor="middle">200</text><line x1="365.50" y1="148.50" x2="365.50" y2="155.50" stroke="#555" stroke-width="1" /><text x="365.6" y="141.3" font-family="Liberation Sans" font-size="9.6" fill="#111" text-anchor="middle">300</text><line x1="438.50" y1="148.50" x2="438.50" y2="155.50" stroke="#555" stroke-width="1" /><text x="438.1" y="141.3" font-family="Liberation Sans" font-size="9.6" fill="#111" text-anchor="middle">400</text><line x1="510.50" y1="148.50" x2="510.50" y2="155.50" stroke="#555" stroke-width="1" /><text x="510.6" y="141.3" font-family="Liberation Sans" font-size="9.6" fill="#111" text-anchor="middle">500</text><line x1="583.50" y1="148.50" x2="583.50" y2="155.50" stroke="#555" stroke-width="1" /><text x="583.1" y="141.3" font-family="Liberation Sans" font-size="9.6" fill="#111" text-anchor="middle">600</text><line x1="655.50" y1="148.50" x2="655.50" y2="155.50" stroke="#555" stroke-width="1" /><text x="655.6" y="141.3" font-family="Liberation Sans" font-size="9.6" fill="#111" text-anchor="middle">700</text><line x1="728.50" y1="148.50" x2="728.50" y2="155.50" stroke="#555" stroke-width="1" /><text x="728.0" y="141.3" font-family="Liberation Sans" font-size="9.6" fill="#111" text-anchor="middle">800</text><line x1="800.50" y1="148.50" x2="800.50" y2="155.50" stroke="#555" stroke-width="1" /><text x="800.5" y="141.3" font-family="Liberation Sans" font-size="9.6" fill="#111" text-anchor="middle">900</text><line x1="873.50" y1="148.50" x2="873.50" y2="155.50" stroke="#555" stroke-width="1" /><text x="873.0" y="141.3" font-family="Liberation Sans" font-size="9.6" fill="#111" text-anchor="middle">1000</text><line x1="945.50" y1="148.50" x2="945.50" y2="155.50" stroke="#555" stroke-width="1" /><text x="945.5" y="141.3" font-family="Liberation Sans" font-size="9.6" fill="#111" text-anchor="middle">1100</text><line x1="1017.50" y1="148.50" x2="1017.50" y2="155.50" stroke="#555" stroke-width="1" /><text x="1018.0" y="141.3" font-family="Liberation Sans" font-size="9.6" fill="#111" text-anchor="middle">1200</text><line x1="1090.50" y1="148.50" x2="1090.50" y2="155.50" stroke="#555" stroke-width="1" /><text x="1090.4" y="141.3" font-family="Liberation Sans" font-size="9.6" fill="#111" text-anchor="middle">1300</text><path d="M200,145 L212,145 L206,151.5 Z" fill="#000"/></svg>
<svg class="a" style="left:72px;top:155px" width="23" height="577" viewBox="72 155 23 577"><rect x="72" y="155" width="23" height="577" fill="#ececec"/><line x1="88.50" y1="725.50" x2="95.50" y2="725.50" stroke="#555" stroke-width="1" /><text transform="translate(81.6,725.4) rotate(-90)" x="0" y="0" font-family="Liberation Sans" font-size="9.6" fill="#111" text-anchor="middle">200</text><line x1="88.50" y1="652.50" x2="95.50" y2="652.50" stroke="#555" stroke-width="1" /><text transform="translate(81.6,652.9) rotate(-90)" x="0" y="0" font-family="Liberation Sans" font-size="9.6" fill="#111" text-anchor="middle">-100</text><line x1="88.50" y1="580.50" x2="95.50" y2="580.50" stroke="#555" stroke-width="1" /><text transform="translate(81.6,580.4) rotate(-90)" x="0" y="0" font-family="Liberation Sans" font-size="9.6" fill="#111" text-anchor="middle">0</text><line x1="88.50" y1="507.50" x2="95.50" y2="507.50" stroke="#555" stroke-width="1" /><text transform="translate(81.6,507.9) rotate(-90)" x="0" y="0" font-family="Liberation Sans" font-size="9.6" fill="#111" text-anchor="middle">100</text><line x1="88.50" y1="435.50" x2="95.50" y2="435.50" stroke="#555" stroke-width="1" /><text transform="translate(81.6,435.4) rotate(-90)" x="0" y="0" font-family="Liberation Sans" font-size="9.6" fill="#111" text-anchor="middle">200</text><line x1="88.50" y1="362.50" x2="95.50" y2="362.50" stroke="#555" stroke-width="1" /><text transform="translate(81.6,363.0) rotate(-90)" x="0" y="0" font-family="Liberation Sans" font-size="9.6" fill="#111" text-anchor="middle">300</text><line x1="88.50" y1="290.50" x2="95.50" y2="290.50" stroke="#555" stroke-width="1" /><text transform="translate(81.6,290.5) rotate(-90)" x="0" y="0" font-family="Liberation Sans" font-size="9.6" fill="#111" text-anchor="middle">400</text><line x1="88.50" y1="218.50" x2="95.50" y2="218.50" stroke="#555" stroke-width="1" /><text transform="translate(81.6,218.0) rotate(-90)" x="0" y="0" font-family="Liberation Sans" font-size="9.6" fill="#111" text-anchor="middle">500</text><path d="M85,481 L85,491 L91.5,486 Z" fill="#000"/></svg>
<svg class="a" style="left:95px;top:155px" width="1044" height="577" viewBox="95 155 1044 577"><rect x="95" y="155" width="1044" height="577" fill="#000"/><rect x="147.6" y="724.8" width="1.2" height="1.2" fill="#3a3a3a"/><rect x="147.6" y="652.3" width="1.2" height="1.2" fill="#3a3a3a"/><rect x="147.6" y="579.8" width="1.2" height="1.2" fill="#3a3a3a"/><rect x="147.6" y="507.3" width="1.2" height="1.2" fill="#3a3a3a"/><rect x="147.6" y="434.8" width="1.2" height="1.2" fill="#3a3a3a"/><rect x="147.6" y="362.4" width="1.2" height="1.2" fill="#3a3a3a"/><rect x="147.6" y="289.9" width="1.2" height="1.2" fill="#3a3a3a"/><rect x="147.6" y="217.4" width="1.2" height="1.2" fill="#3a3a3a"/><rect x="220.1" y="724.8" width="1.2" height="1.2" fill="#3a3a3a"/><rect x="220.1" y="652.3" width="1.2" height="1.2" fill="#3a3a3a"/><rect x="220.1" y="579.8" width="1.2" height="1.2" fill="#3a3a3a"/><rect x="220.1" y="507.3" width="1.2" height="1.2" fill="#3a3a3a"/><rect x="220.1" y="434.8" width="1.2" height="1.2" fill="#3a3a3a"/><rect x="220.1" y="362.4" width="1.2" height="1.2" fill="#3a3a3a"/><rect x="220.1" y="289.9" width="1.2" height="1.2" fill="#3a3a3a"/><rect x="220.1" y="217.4" width="1.2" height="1.2" fill="#3a3a3a"/><rect x="292.6" y="724.8" width="1.2" height="1.2" fill="#3a3a3a"/><rect x="292.6" y="652.3" width="1.2" height="1.2" fill="#3a3a3a"/><rect x="292.6" y="579.8" width="1.2" height="1.2" fill="#3a3a3a"/><rect x="292.6" y="507.3" width="1.2" height="1.2" fill="#3a3a3a"/><rect x="292.6" y="434.8" width="1.2" height="1.2" fill="#3a3a3a"/><rect x="292.6" y="362.4" width="1.2" height="1.2" fill="#3a3a3a"/><rect x="292.6" y="289.9" width="1.2" height="1.2" fill="#3a3a3a"/><rect x="292.6" y="217.4" width="1.2" height="1.2" fill="#3a3a3a"/><rect x="365.0" y="724.8" width="1.2" height="1.2" fill="#3a3a3a"/><rect x="365.0" y="652.3" width="1.2" height="1.2" fill="#3a3a3a"/><rect x="365.0" y="579.8" width="1.2" height="1.2" fill="#3a3a3a"/><rect x="365.0" y="507.3" width="1.2" height="1.2" fill="#3a3a3a"/><rect x="365.0" y="434.8" width="1.2" height="1.2" fill="#3a3a3a"/><rect x="365.0" y="362.4" width="1.2" height="1.2" fill="#3a3a3a"/><rect x="365.0" y="289.9" width="1.2" height="1.2" fill="#3a3a3a"/><rect x="365.0" y="217.4" width="1.2" height="1.2" fill="#3a3a3a"/><rect x="437.5" y="724.8" width="1.2" height="1.2" fill="#3a3a3a"/><rect x="437.5" y="652.3" width="1.2" height="1.2" fill="#3a3a3a"/><rect x="437.5" y="579.8" width="1.2" height="1.2" fill="#3a3a3a"/><rect x="437.5" y="507.3" width="1.2" height="1.2" fill="#3a3a3a"/><rect x="437.5" y="434.8" width="1.2" height="1.2" fill="#3a3a3a"/><rect x="437.5" y="362.4" width="1.2" height="1.2" fill="#3a3a3a"/><rect x="437.5" y="289.9" width="1.2" height="1.2" fill="#3a3a3a"/><rect x="437.5" y="217.4" width="1.2" height="1.2" fill="#3a3a3a"/><rect x="510.0" y="724.8" width="1.2" height="1.2" fill="#3a3a3a"/><rect x="510.0" y="652.3" width="1.2" height="1.2" fill="#3a3a3a"/><rect x="510.0" y="579.8" width="1.2" height="1.2" fill="#3a3a3a"/><rect x="510.0" y="507.3" width="1.2" height="1.2" fill="#3a3a3a"/><rect x="510.0" y="434.8" width="1.2" height="1.2" fill="#3a3a3a"/><rect x="510.0" y="362.4" width="1.2" height="1.2" fill="#3a3a3a"/><rect x="510.0" y="289.9" width="1.2" height="1.2" fill="#3a3a3a"/><rect x="510.0" y="217.4" width="1.2" height="1.2" fill="#3a3a3a"/><rect x="582.5" y="724.8" width="1.2" height="1.2" fill="#3a3a3a"/><rect x="582.5" y="652.3" width="1.2" height="1.2" fill="#3a3a3a"/><rect x="582.5" y="579.8" width="1.2" height="1.2" fill="#3a3a3a"/><rect x="582.5" y="507.3" width="1.2" height="1.2" fill="#3a3a3a"/><rect x="582.5" y="434.8" width="1.2" height="1.2" fill="#3a3a3a"/><rect x="582.5" y="362.4" width="1.2" height="1.2" fill="#3a3a3a"/><rect x="582.5" y="289.9" width="1.2" height="1.2" fill="#3a3a3a"/><rect x="582.5" y="217.4" width="1.2" height="1.2" fill="#3a3a3a"/><rect x="655.0" y="724.8" width="1.2" height="1.2" fill="#3a3a3a"/><rect x="655.0" y="652.3" width="1.2" height="1.2" fill="#3a3a3a"/><rect x="655.0" y="579.8" width="1.2" height="1.2" fill="#3a3a3a"/><rect x="655.0" y="507.3" width="1.2" height="1.2" fill="#3a3a3a"/><rect x="655.0" y="434.8" width="1.2" height="1.2" fill="#3a3a3a"/><rect x="655.0" y="362.4" width="1.2" height="1.2" fill="#3a3a3a"/><rect x="655.0" y="289.9" width="1.2" height="1.2" fill="#3a3a3a"/><rect x="655.0" y="217.4" width="1.2" height="1.2" fill="#3a3a3a"/><rect x="727.4" y="724.8" width="1.2" height="1.2" fill="#3a3a3a"/><rect x="727.4" y="652.3" width="1.2" height="1.2" fill="#3a3a3a"/><rect x="727.4" y="579.8" width="1.2" height="1.2" fill="#3a3a3a"/><rect x="727.4" y="507.3" width="1.2" height="1.2" fill="#3a3a3a"/><rect x="727.4" y="434.8" width="1.2" height="1.2" fill="#3a3a3a"/><rect x="727.4" y="362.4" width="1.2" height="1.2" fill="#3a3a3a"/><rect x="727.4" y="289.9" width="1.2" height="1.2" fill="#3a3a3a"/><rect x="727.4" y="217.4" width="1.2" height="1.2" fill="#3a3a3a"/><rect x="799.9" y="724.8" width="1.2" height="1.2" fill="#3a3a3a"/><rect x="799.9" y="652.3" width="1.2" height="1.2" fill="#3a3a3a"/><rect x="799.9" y="579.8" width="1.2" height="1.2" fill="#3a3a3a"/><rect x="799.9" y="507.3" width="1.2" height="1.2" fill="#3a3a3a"/><rect x="799.9" y="434.8" width="1.2" height="1.2" fill="#3a3a3a"/><rect x="799.9" y="362.4" width="1.2" height="1.2" fill="#3a3a3a"/><rect x="799.9" y="289.9" width="1.2" height="1.2" fill="#3a3a3a"/><rect x="799.9" y="217.4" width="1.2" height="1.2" fill="#3a3a3a"/><rect x="872.4" y="724.8" width="1.2" height="1.2" fill="#3a3a3a"/><rect x="872.4" y="652.3" width="1.2" height="1.2" fill="#3a3a3a"/><rect x="872.4" y="579.8" width="1.2" height="1.2" fill="#3a3a3a"/><rect x="872.4" y="507.3" width="1.2" height="1.2" fill="#3a3a3a"/><rect x="872.4" y="434.8" width="1.2" height="1.2" fill="#3a3a3a"/><rect x="872.4" y="362.4" width="1.2" height="1.2" fill="#3a3a3a"/><rect x="872.4" y="289.9" width="1.2" height="1.2" fill="#3a3a3a"/><rect x="872.4" y="217.4" width="1.2" height="1.2" fill="#3a3a3a"/><rect x="944.9" y="724.8" width="1.2" height="1.2" fill="#3a3a3a"/><rect x="944.9" y="652.3" width="1.2" height="1.2" fill="#3a3a3a"/><rect x="944.9" y="579.8" width="1.2" height="1.2" fill="#3a3a3a"/><rect x="944.9" y="507.3" width="1.2" height="1.2" fill="#3a3a3a"/><rect x="944.9" y="434.8" width="1.2" height="1.2" fill="#3a3a3a"/><rect x="944.9" y="362.4" width="1.2" height="1.2" fill="#3a3a3a"/><rect x="944.9" y="289.9" width="1.2" height="1.2" fill="#3a3a3a"/><rect x="944.9" y="217.4" width="1.2" height="1.2" fill="#3a3a3a"/><rect x="1017.4" y="724.8" width="1.2" height="1.2" fill="#3a3a3a"/><rect x="1017.4" y="652.3" width="1.2" height="1.2" fill="#3a3a3a"/><rect x="1017.4" y="579.8" width="1.2" height="1.2" fill="#3a3a3a"/><rect x="1017.4" y="507.3" width="1.2" height="1.2" fill="#3a3a3a"/><rect x="1017.4" y="434.8" width="1.2" height="1.2" fill="#3a3a3a"/><rect x="1017.4" y="362.4" width="1.2" height="1.2" fill="#3a3a3a"/><rect x="1017.4" y="289.9" width="1.2" height="1.2" fill="#3a3a3a"/><rect x="1017.4" y="217.4" width="1.2" height="1.2" fill="#3a3a3a"/><rect x="1089.8" y="724.8" width="1.2" height="1.2" fill="#3a3a3a"/><rect x="1089.8" y="652.3" width="1.2" height="1.2" fill="#3a3a3a"/><rect x="1089.8" y="579.8" width="1.2" height="1.2" fill="#3a3a3a"/><rect x="1089.8" y="507.3" width="1.2" height="1.2" fill="#3a3a3a"/><rect x="1089.8" y="434.8" width="1.2" height="1.2" fill="#3a3a3a"/><rect x="1089.8" y="362.4" width="1.2" height="1.2" fill="#3a3a3a"/><rect x="1089.8" y="289.9" width="1.2" height="1.2" fill="#3a3a3a"/><rect x="1089.8" y="217.4" width="1.2" height="1.2" fill="#3a3a3a"/><line x1="148.50" y1="155.50" x2="148.50" y2="732.50" stroke="#1a1a1a" stroke-width="1" /><line x1="95.50" y1="580.50" x2="1139.50" y2="580.50" stroke="#222222" stroke-width="1" /><line x1="872.50" y1="155.50" x2="872.50" y2="732.50" stroke="#191919" stroke-width="1" /><line x1="127.50" y1="580.50" x2="168.50" y2="580.50" stroke="#9a1010" stroke-width="1" /><line x1="148.50" y1="560.50" x2="148.50" y2="600.50" stroke="#9a1010" stroke-width="1" /><line x1="206.50" y1="155.50" x2="206.50" y2="732.50" stroke="#6e5214" stroke-width="1" stroke-dasharray="3.2,2"/><line x1="95.50" y1="486.50" x2="1139.50" y2="486.50" stroke="#6e5214" stroke-width="1" stroke-dasharray="3.2,2"/><circle cx="206" cy="486" r="4.8" fill="none" stroke="#8a2a1a" stroke-width="1"/><line x1="201.50" y1="486.50" x2="210.50" y2="486.50" stroke="#8a2a1a" stroke-width="0.8" /><line x1="206.50" y1="481.50" x2="206.50" y2="490.50" stroke="#8a2a1a" stroke-width="0.8" /><polyline points="474.50,182.50 461.50,182.50 461.50,185.50 474.50,185.50 474.50,296.50 461.50,296.50 461.50,298.50 474.50,298.50 474.50,306.50 371.50,306.50 371.50,175.50 474.50,175.50 474.50,182.50" fill="none" stroke="#c4c4c4" stroke-width="1" stroke-linejoin="round"/><polygon points="425.50,182.50 440.50,182.50 440.50,185.50 425.50,185.50" fill="none" stroke="#c4c4c4" stroke-width="1" stroke-linejoin="round"/><polygon points="425.50,296.50 440.50,296.50 440.50,298.50 425.50,298.50" fill="none" stroke="#c4c4c4" stroke-width="1" stroke-linejoin="round"/><polyline points="503.50,182.50 515.50,182.50 515.50,185.50 503.50,185.50 503.50,296.50 515.50,296.50 515.50,298.50 503.50,298.50 503.50,306.50 606.50,306.50 606.50,175.50 503.50,175.50 503.50,182.50" fill="none" stroke="#c4c4c4" stroke-width="1" stroke-linejoin="round"/><polygon points="537.50,182.50 552.50,182.50 552.50,185.50 537.50,185.50" fill="none" stroke="#c4c4c4" stroke-width="1" stroke-linejoin="round"/><polygon points="537.50,296.50 552.50,296.50 552.50,298.50 537.50,298.50" fill="none" stroke="#c4c4c4" stroke-width="1" stroke-linejoin="round"/><polygon points="394.50,558.50 474.50,558.50 474.50,565.50 394.50,565.50" fill="none" stroke="#c4c4c4" stroke-width="1" stroke-linejoin="round"/><polygon points="394.50,710.50 474.50,710.50 474.50,718.50 394.50,718.50" fill="none" stroke="#c4c4c4" stroke-width="1" stroke-linejoin="round"/><polyline points="474.50,580.50 452.50,580.50 452.50,583.50 474.50,583.50 474.50,693.50 452.50,693.50 452.50,696.50 474.50,696.50 474.50,703.50 394.50,703.50 394.50,572.50 474.50,572.50 474.50,580.50" fill="none" stroke="#c4c4c4" stroke-width="1" stroke-linejoin="round"/><polygon points="503.50,558.50 583.50,558.50 583.50,565.50 503.50,565.50" fill="none" stroke="#c4c4c4" stroke-width="1" stroke-linejoin="round"/><polygon points="503.50,710.50 583.50,710.50 583.50,718.50 503.50,718.50" fill="none" stroke="#c4c4c4" stroke-width="1" stroke-linejoin="round"/><polyline points="503.50,580.50 525.50,580.50 525.50,583.50 503.50,583.50 503.50,693.50 525.50,693.50 525.50,696.50 503.50,696.50 503.50,703.50 583.50,703.50 583.50,572.50 503.50,572.50 503.50,580.50" fill="none" stroke="#c4c4c4" stroke-width="1" stroke-linejoin="round"/><polygon points="379.50,575.50 387.50,575.50 387.50,700.50 379.50,700.50" fill="none" stroke="#c4c4c4" stroke-width="1" stroke-linejoin="round"/><polygon points="590.50,575.50 597.50,575.50 597.50,700.50 590.50,700.50" fill="none" stroke="#c4c4c4" stroke-width="1" stroke-linejoin="round"/><line x1="488.50" y1="333.50" x2="488.50" y2="516.50" stroke="#a01212" stroke-width="1" stroke-dasharray="6,2,1.5,2"/><line x1="474.50" y1="357.50" x2="504.50" y2="357.50" stroke="#a01212" stroke-width="1" stroke-dasharray="4,2,1,2"/><line x1="459.50" y1="424.50" x2="518.50" y2="424.50" stroke="#a01212" stroke-width="1" stroke-dasharray="4,2,1,2"/><path d="M479.2,373.8 L479.2,357.8 A9.5,9.5 0 0 1 498.2,357.8 L498.2,374.4 L514.8,387.5 L516.6,385.6 L528,394.4 L526.4,396.4 L546.9,413.5 L534.4,489.6 L510.5,489.6 L510.5,493.4 L534,493.4 L532.3,500.2 L445.6,500.2 L445.6,493.4 L466.9,493.4 L466.9,489.6 L443.2,489.6 L430.7,413.5 L451.2,396.2 L449.6,394.4 L461,386 L462.8,388 Z" fill="none" stroke="#c4c4c4" stroke-width="1" stroke-linejoin="round"/><circle cx="488.8" cy="357.8" r="2" fill="none" stroke="#c4c4c4" stroke-width="0.9"/><circle cx="488.8" cy="424.9" r="20.5" fill="none" stroke="#c4c4c4" stroke-width="1"/><path transform="translate(0,0)" d="M478,421 C476,415 478,411 482,410.8 C486,410.5 489,411 490.5,411.5 L488.5,414.5 C492,422 497,430 502.5,437.5 C500,439.5 497,437.5 494,436.5 C491,435 489,437.5 487,436.5 C481,432.5 477,427 478,421 Z M469,427.7 L494.6,445.5 M469.8,425.6 L496.5,443.5" fill="none" stroke="#c4c4c4" stroke-width="0.9"/><line x1="873.50" y1="520.50" x2="873.50" y2="732.50" stroke="#a01010" stroke-width="1" stroke-dasharray="6,2,1.5,2"/><path d="M863.3,556.5 L863.3,543.9 A9.8,9.8 0 0 1 882.9,543.9 L882.9,556.5" fill="none" stroke="#c4c4c4" stroke-width="1"/><circle cx="873.1" cy="544.3" r="2.3" fill="none" stroke="#c4c4c4" stroke-width="0.9"/><polyline points="793.50,615.50 873.50,550.50 953.50,615.50" fill="none" stroke="#c4c4c4" stroke-width="1" stroke-linejoin="round"/><polyline points="795.50,617.50 873.50,555.50 951.50,617.50" fill="none" stroke="#c4c4c4" stroke-width="1" stroke-linejoin="round"/><line x1="793.50" y1="615.50" x2="795.50" y2="617.50" stroke="#c4c4c4" stroke-width="1" /><line x1="953.50" y1="615.50" x2="951.50" y2="617.50" stroke="#c4c4c4" stroke-width="1" /><polyline points="815.50,599.50 826.50,669.50" fill="none" stroke="#c4c4c4" stroke-width="1" stroke-linejoin="round"/><polyline points="931.50,599.50 919.50,669.50" fill="none" stroke="#c4c4c4" stroke-width="1" stroke-linejoin="round"/><polygon points="792.50,669.50 953.50,669.50 953.50,676.50 792.50,676.50" fill="none" stroke="#c4c4c4" stroke-width="1" stroke-linejoin="round"/><line x1="792.50" y1="678.50" x2="953.50" y2="678.50" stroke="#c4c4c4" stroke-width="1" /><path d="M828,679 L829.5,685 Q830,686.3 832,686.3 L914,686.3 Q916.5,686.3 917,685 L918.1,679" fill="none" stroke="#c4c4c4" stroke-width="1"/><circle cx="872.9" cy="610.9" r="20.8" fill="none" stroke="#c4c4c4" stroke-width="1"/><path transform="translate(384.1,186)" d="M478,421 C476,415 478,411 482,410.8 C486,410.5 489,411 490.5,411.5 L488.5,414.5 C492,422 497,430 502.5,437.5 C500,439.5 497,437.5 494,436.5 C491,435 489,437.5 487,436.5 C481,432.5 477,427 478,421 Z M469,427.7 L494.6,445.5 M469.8,425.6 L496.5,443.5" fill="none" stroke="#c4c4c4" stroke-width="0.9"/><line x1="873.50" y1="534.50" x2="977.50" y2="534.50" stroke="#0a7078" stroke-width="1" /><line x1="974.50" y1="534.50" x2="974.50" y2="686.50" stroke="#0a7078" stroke-width="1" /><line x1="918.50" y1="686.50" x2="977.50" y2="686.50" stroke="#0a7078" stroke-width="1" /><path d="M974.7,534.5 L973.2,541 L976.2,541 Z" fill="#0a7078"/><path d="M974.7,686 L973.2,679.5 L976.2,679.5 Z" fill="#0a7078"/><line x1="792.50" y1="679.50" x2="792.50" y2="714.50" stroke="#0a7078" stroke-width="1" /><line x1="953.50" y1="679.50" x2="953.50" y2="714.50" stroke="#0a7078" stroke-width="1" /><line x1="792.50" y1="711.50" x2="953.50" y2="711.50" stroke="#0a7078" stroke-width="1" /><path d="M793.3,711.2 L799.8,709.7 L799.8,712.7 Z" fill="#0a7078"/><path d="M952.6,711.2 L946.1,709.7 L946.1,712.7 Z" fill="#0a7078"/><text x="873" y="709.5" font-family="Liberation Sans" font-size="6.5" fill="#0a7078" text-anchor="middle">220</text><text transform="translate(972.5,610.5) rotate(-90)" font-family="Liberation Sans" font-size="6.5" fill="#0a7078" text-anchor="middle">309</text><polyline points="760.50,366.50 873.50,430.50 965.50,379.50" fill="none" stroke="#c4c4c4" stroke-width="0.9" stroke-linejoin="round"/><polyline points="760.50,372.50 873.50,436.50 965.50,385.50" fill="none" stroke="#c4c4c4" stroke-width="0.9" stroke-linejoin="round"/><polyline points="760.50,376.50 873.50,439.50 965.50,387.50" fill="none" stroke="#c4c4c4" stroke-width="0.9" stroke-linejoin="round"/><polyline points="760.50,366.50 760.50,376.50" fill="none" stroke="#c4c4c4" stroke-width="0.9" stroke-linejoin="round"/><polyline points="965.50,379.50 965.50,387.50" fill="none" stroke="#c4c4c4" stroke-width="0.9" stroke-linejoin="round"/><polyline points="873.50,430.50 873.50,439.50" fill="none" stroke="#c4c4c4" stroke-width="0.9" stroke-linejoin="round"/><polyline points="763.50,367.50 873.50,427.50 960.50,381.50" fill="none" stroke="#c4c4c4" stroke-width="0.9" stroke-linejoin="round"/><polyline points="760.50,366.50 785.50,353.50" fill="none" stroke="#c4c4c4" stroke-width="0.9" stroke-linejoin="round"/><polyline points="763.50,367.50 786.50,356.50" fill="none" stroke="#c4c4c4" stroke-width="0.9" stroke-linejoin="round"/><polyline points="939.50,363.50 965.50,379.50" fill="none" stroke="#c4c4c4" stroke-width="0.9" stroke-linejoin="round"/><polyline points="938.50,366.50 960.50,381.50" fill="none" stroke="#c4c4c4" stroke-width="0.9" stroke-linejoin="round"/><polyline points="817.50,399.50 817.50,406.50" fill="none" stroke="#c4c4c4" stroke-width="0.9" stroke-linejoin="round"/><polyline points="781.50,317.50 790.50,380.50" fill="none" stroke="#c4c4c4" stroke-width="0.9" stroke-linejoin="round"/><polyline points="862.50,370.50 854.50,418.50" fill="none" stroke="#c4c4c4" stroke-width="0.9" stroke-linejoin="round"/><polyline points="864.50,371.50 857.50,419.50" fill="none" stroke="#c4c4c4" stroke-width="0.9" stroke-linejoin="round"/><polyline points="939.50,350.50 934.50,373.50" fill="none" stroke="#c4c4c4" stroke-width="0.9" stroke-linejoin="round"/><polyline points="936.50,351.50 931.50,373.50" fill="none" stroke="#c4c4c4" stroke-width="0.9" stroke-linejoin="round"/><polyline points="914.50,363.50 934.50,373.50" fill="none" stroke="#c4c4c4" stroke-width="0.9" stroke-linejoin="round"/><polyline points="760.50,322.50 815.50,291.50" fill="none" stroke="#c4c4c4" stroke-width="0.9" stroke-linejoin="round"/><polyline points="760.50,322.50 816.50,301.50" fill="none" stroke="#c4c4c4" stroke-width="0.9" stroke-linejoin="round"/><polyline points="761.50,325.50 816.50,304.50" fill="none" stroke="#c4c4c4" stroke-width="0.9" stroke-linejoin="round"/><polyline points="760.50,322.50 761.50,325.50" fill="none" stroke="#c4c4c4" stroke-width="0.9" stroke-linejoin="round"/><polyline points="824.50,285.50 856.50,266.50 894.50,252.50" fill="none" stroke="#c4c4c4" stroke-width="0.9" stroke-linejoin="round"/><path d="M876,261.5 L884,258.5" stroke="#c4c4c4" stroke-width="1.8"/><path d="M790,311 L797,308.5" stroke="#c4c4c4" stroke-width="1.6"/><polyline points="830.50,294.50 900.50,254.50" fill="none" stroke="#c4c4c4" stroke-width="0.9" stroke-linejoin="round"/><polyline points="830.50,296.50 900.50,256.50" fill="none" stroke="#c4c4c4" stroke-width="0.9" stroke-linejoin="round"/><polyline points="817.50,302.50 873.50,386.50 965.50,333.50 911.50,251.50" fill="none" stroke="#c4c4c4" stroke-width="0.9" stroke-linejoin="round"/><polyline points="819.50,301.50 829.50,316.50" fill="none" stroke="#c4c4c4" stroke-width="0.9" stroke-linejoin="round"/><path d="M816,300.9 L816,289.7 Q816,284.9 820.8,284.9 Q826,284.9 829.6,292.9 L828.8,308.4" fill="none" stroke="#c4c4c4" stroke-width="0.9"/><path d="M821.2,284.9 Q827.5,285.9 831,293.9 L831,306.4 L828.8,308.4" fill="none" stroke="#c4c4c4" stroke-width="0.9"/><path d="M816,300.9 L822,297.4 L828.8,308.4" fill="none" stroke="#c4c4c4" stroke-width="0.9"/><ellipse cx="821.9" cy="294.5" rx="1.5" ry="2" fill="none" stroke="#c4c4c4" stroke-width="0.9"/><path d="M895.3,254 L895.3,242.8 Q895.3,238 900.0999999999999,238 Q905.3,238 908.9,246 L908.0999999999999,261.5" fill="none" stroke="#c4c4c4" stroke-width="0.9"/><path d="M900.5,238 Q906.8,239 910.3,247 L910.3,259.5 L908.0999999999999,261.5" fill="none" stroke="#c4c4c4" stroke-width="0.9"/><path d="M895.3,254 L901.3,250.5 L908.0999999999999,261.5" fill="none" stroke="#c4c4c4" stroke-width="0.9"/><ellipse cx="901.9" cy="248.7" rx="1.5" ry="2" fill="none" stroke="#c4c4c4" stroke-width="0.9"/><ellipse cx="821.6" cy="348.8" rx="14.2" ry="19.2" transform="rotate(-22 821.6 348.8)" fill="none" stroke="#c4c4c4" stroke-width="0.9"/><ellipse cx="822.6" cy="349.8" rx="11.8" ry="16.5" transform="rotate(-22 822.6 349.8)" fill="none" stroke="#c4c4c4" stroke-width="0.9"/><path d="M816,336 Q821,331 826,338 L832,356 Q830,364 824,362 L818,352 Z" fill="none" stroke="#c4c4c4" stroke-width="0.8"/><path d="M819,342 Q821,338 824,342 L828,356" fill="none" stroke="#c4c4c4" stroke-width="0.7"/><path d="M842.6,329.3 L849.6,340.3 L851.6,339 L844.6,328 Z" fill="none" stroke="#c4c4c4" stroke-width="0.8"/><path d="M921.8,283.5 L929.8,293.5 L932,292 L924,282 Z" fill="none" stroke="#c4c4c4" stroke-width="0.8"/><defs><radialGradient id="ring" cx="0.5" cy="0.5" r="0.5">
<stop offset="0.72" stop-color="#10161b" stop-opacity="0"/>
<stop offset="0.76" stop-color="#1c2329" stop-opacity="0.8"/>
<stop offset="0.80" stop-color="#3b4852"/>
<stop offset="0.835" stop-color="#52616d"/>
<stop offset="0.87" stop-color="#485662"/>
<stop offset="0.905" stop-color="#63737f"/>
<stop offset="0.935" stop-color="#5a6a77"/>
<stop offset="0.965" stop-color="#788998"/>
<stop offset="0.985" stop-color="#6f8090"/>
<stop offset="1" stop-color="#5f6f7e" stop-opacity="0"/>
</radialGradient></defs><circle cx="460.9" cy="385.7" r="40" fill="url(#ring)" opacity="0.72"/><rect x="445.1" y="384" width="31.5" height="3.6" fill="#c2c2c2"/><rect x="459.1" y="370.3" width="3.6" height="31.4" fill="#c2c2c2"/><circle cx="460.9" cy="385.7" r="2" fill="#333" stroke="#888" stroke-width="0.8"/></svg>
<div class="a" style="left:95px;top:732px;width:1058px;height:14px;background:#fafafa"></div><div class="a" style="left:72px;top:732px;width:23px;height:14px;background:#ececec"></div><div class="a" style="left:183px;top:736px;width:718px;height:8px;border-radius:4px;background:#7d7d7d"></div><div class="a" style="left:1139px;top:155px;width:14px;height:577px;background:#fafafa"></div><div class="a" style="left:1143px;top:319px;width:8px;height:244px;border-radius:4px;background:#7d7d7d"></div><div class="a" style="left:1067px;top:732px;width:86px;height:15px;background:#e8e8e8"></div><div class="t" style="left:1087.5px;top:734px;font-size:13px;color:#111">100 &lt; 1000</div>
<div class="a" style="left:72px;top:746px;width:1082px;height:52px;background:#ececec"></div><div class="a" style="left:72px;top:746px;width:1082px;height:3px;background:#c4c4c4"></div><div class="a" style="left:72px;top:749px;width:1082px;height:21px;background:#fff"></div><div class="a" style="left:72px;top:770px;width:1082px;height:1.3px;background:#c0c0c0"></div><div class="t" style="left:77px;top:751.5px;font-size:13.3px;font-style:italic;color:#0000e0">Kommando: vt</div><div class="a" style="left:1138.5px;top:749px;width:14.5px;height:21px;background:#f6f6f6"></div><div class="a" style="left:1142px;top:750px;width:8px;height:17px;border-radius:4px;background:#7d7d7d"></div><div class="t" style="left:73px;top:778px;font-size:13.3px;color:#111">Erster Eckpunkt:</div><div class="a" style="left:175px;top:776px;width:951px;height:18px;background:#fff"></div><svg class="a" style="left:1127px;top:771px" width="27" height="27" viewBox="1127 771 27 27">
<defs><linearGradient id="cbg" x1="0" y1="0" x2="0" y2="1"><stop offset="0" stop-color="#e4e4e4"/><stop offset="0.4" stop-color="#f2f2f2"/><stop offset="1" stop-color="#f4f4f4"/></linearGradient></defs>
<rect x="1127.6" y="772.6" width="25" height="24.8" fill="url(#cbg)" stroke="#b4b4b4" stroke-width="1"/>
<rect x="1133.4" y="780.4" width="13.2" height="9.3" fill="#f0f0f0" stroke="#555" stroke-width="0.8"/><rect x="1133" y="780" width="14" height="2.8" fill="#000"/>
</svg><div class="a" style="left:1153px;top:746px;width:1px;height:52px;background:#c8c8c8"></div>
<svg class="a" style="left:1154px;top:105px" width="346" height="693" viewBox="1154 105 346 693"><defs>
<linearGradient id="dtb" x1="0" y1="0" x2="0" y2="1"><stop offset="0" stop-color="#e9e9e9"/><stop offset="1" stop-color="#dadada"/></linearGradient>
<linearGradient id="dbg" x1="0" y1="0" x2="0" y2="1"><stop offset="0" stop-color="#e4e4e4"/><stop offset="0.35" stop-color="#f0f0f0"/><stop offset="1" stop-color="#f7f7f7"/></linearGradient>
<linearGradient id="rtb" x1="0" y1="0" x2="1" y2="0"><stop offset="0" stop-color="#f0f0f0"/><stop offset="0.5" stop-color="#dcdcdc"/><stop offset="1" stop-color="#c4c4c4"/></linearGradient>
</defs><rect x="1154" y="106.5" width="346" height="1.5" fill="#b8b8b8"/><rect x="1154" y="108" width="301" height="690" fill="#ececec"/><rect x="1154" y="108" width="1.2" height="690" fill="#c8c8c8"/><rect x="1155" y="108" width="300" height="22" fill="url(#dtb)"/><rect x="1155" y="129" width="300" height="1" fill="#c9c9c9"/><circle cx="1163.9" cy="117.8" r="6.9" fill="#6f6f6f"/><circle cx="1182" cy="117.8" r="6.9" fill="#6f6f6f"/><path d="M1161.2,115.1 L1166.6,120.5 M1166.6,115.1 L1161.2,120.5" stroke="#fff" stroke-width="1.6"/><path d="M1181,117.5 V115.0 H1186 V118.8 H1184" fill="none" stroke="#fff" stroke-width="1.1"/><rect x="1178.7" y="117.5" width="5.2" height="3.9" fill="none" stroke="#fff" stroke-width="1.1"/><text x="1322" y="122.6" font-family="Liberation Sans" font-size="11.8" fill="#333" text-anchor="middle">Blockliste</text><rect x="1156.5" y="131.35" width="35.856250000000045" height="23.5" fill="url(#dbg)" stroke="#9d9d9d" stroke-width="1.5"/><rect x="1193.85625" y="131.35" width="35.856250000000045" height="23.5" fill="url(#dbg)" stroke="#9d9d9d" stroke-width="1.5"/><rect x="1231.2125" y="131.35" width="35.85624999999982" height="23.5" fill="url(#dbg)" stroke="#9d9d9d" stroke-width="1.5"/><rect x="1268.56875" y="131.35" width="35.856250000000045" height="23.5" fill="url(#dbg)" stroke="#9d9d9d" stroke-width="1.5"/><rect x="1305.925" y="131.35" width="35.856250000000045" height="23.5" fill="url(#dbg)" stroke="#9d9d9d" stroke-width="1.5"/><rect x="1343.28125" y="131.35" width="35.85624999999982" height="23.5" fill="url(#dbg)" stroke="#9d9d9d" stroke-width="1.5"/><rect x="1379.8874999999998" y="130.6" width="37.35624999999999" height="25" fill="#ececec"/><rect x="1417.9937499999999" y="131.35" width="35.856250000000045" height="23.5" fill="url(#dbg)" stroke="#9d9d9d" stroke-width="1.5"/><ellipse cx="1174.428125" cy="142.9" rx="7.4" ry="5.3" fill="#000"/><ellipse cx="1174.428125" cy="143.8" rx="5.0" ry="3.1" fill="#fff"/><circle cx="1174.628125" cy="142.4" r="3.0" fill="#000"/><circle cx="1173.628125" cy="141.6" r="0.7" fill="#888"/><ellipse cx="1211.784375" cy="142.9" rx="7.4" ry="5.3" fill="#a8a8a8"/><ellipse cx="1211.784375" cy="143.8" rx="5.0" ry="3.1" fill="#fff"/><circle cx="1211.984375" cy="142.4" r="3.0" fill="#a8a8a8"/><circle cx="1210.984375" cy="141.6" r="0.7" fill="#888"/><path d="M1243.140625,142.9 h12 M1249.140625,136.9 v12" stroke="#ff0000" stroke-width="2.8"/><path d="M1279.996875,142.9 h13" stroke="#ff0000" stroke-width="2.8"/><text x="1316.8531249999999" y="147" font-family="Liberation Sans" font-size="11" fill="#222">a</text><rect x="1323.4531249999998" y="136" width="0.8" height="12" fill="#333"/><text x="1325.053125" y="147" font-family="Liberation Sans" font-size="11" fill="#222">b</text><g transform="translate(1353.709375,150.2) scale(1.0)"><path d="M0.3,-0.3 L2.2,-3.8 L12.6,-14.2 L14.8,-12 L4.4,-1.6 Z" fill="#e2a640" stroke="#8a5a10" stroke-width="0.5"/><path d="M2.6,-4.2 L13,-14.6" stroke="#f6d488" stroke-width="0.7"/><path d="M11.6,-13.2 L13.2,-14.8 Q14,-15.5 14.8,-14.8 L15.4,-14.2 Q16.1,-13.4 15.4,-12.6 L13.8,-11 Z" fill="#e42020"/><path d="M0,0 L0.9,-2.2 L2.2,-0.9 Z" fill="#333"/></g><rect x="1393.5" y="136.5" width="11" height="12.2" fill="#f2f2f2" stroke="#d8d8d8" stroke-width="0.8"/><path d="M1395,138.8 Q1400.5,138 1400.5,143 L1400.5,144.5" fill="none" stroke="#7f9ff2" stroke-width="2"/><path d="M1396.6,144 L1404.2,144 L1400.4,148 Z" fill="#7f9ff2"/><rect x="1431.3" y="138.3" width="9.6" height="9.4" rx="0.8" fill="#e9845a" stroke="#e23c22" stroke-width="1.1"/><path d="M1433.6,140.6 l5,4.8 M1438.6,140.6 l-5,4.8" stroke="#fff" stroke-width="1.3"/><rect x="1155.5" y="156.5" width="298.5" height="166.5" fill="#fff"/><rect x="1155" y="156" width="299.5" height="1" fill="#bdbdbd"/><rect x="1155" y="197.2" width="299" height="19.6" fill="#d6d6d6"/><ellipse cx="1168.7" cy="167.3" rx="7.03" ry="5.034999999999999" fill="#000"/><ellipse cx="1168.7" cy="168.155" rx="4.75" ry="2.945" fill="#fff"/><circle cx="1168.89" cy="166.82500000000002" r="2.8499999999999996" fill="#000"/><circle cx="1167.94" cy="166.065" r="0.6649999999999999" fill="#888"/><text x="1205.2" y="171.10000000000002" font-family="Liberation Sans" font-size="13.5" fill="#111">Model (*Model_Space)</text><ellipse cx="1168.7" cy="187.3" rx="7.03" ry="5.034999999999999" fill="#000"/><ellipse cx="1168.7" cy="188.155" rx="4.75" ry="2.945" fill="#fff"/><circle cx="1168.89" cy="186.82500000000002" r="2.8499999999999996" fill="#000"/><circle cx="1167.94" cy="186.065" r="0.6649999999999999" fill="#888"/><text x="1205.2" y="191.10000000000002" font-family="Liberation Sans" font-size="13.5" fill="#111">Layout1 (*Paper_Space)</text><ellipse cx="1168.7" cy="207.3" rx="7.03" ry="5.034999999999999" fill="#3b4a5e"/><ellipse cx="1168.7" cy="208.155" rx="4.75" ry="2.945" fill="#fff"/><circle cx="1168.89" cy="206.82500000000002" r="2.8499999999999996" fill="#3b4a5e"/><circle cx="1167.94" cy="206.065" r="0.6649999999999999" fill="#888"/><text x="1205.2" y="211.10000000000002" font-family="Liberation Sans" font-size="13.5" fill="#111">Layout2 (*Paper_Space0)</text><ellipse cx="1168.7" cy="227.3" rx="7.03" ry="5.034999999999999" fill="#000"/><ellipse cx="1168.7" cy="228.155" rx="4.75" ry="2.945" fill="#fff"/><circle cx="1168.89" cy="226.82500000000002" r="2.8499999999999996" fill="#000"/><circle cx="1167.94" cy="226.065" r="0.6649999999999999" fill="#888"/><text x="1205.2" y="231.10000000000002" font-family="Liberation Sans" font-size="13.5" fill="#111">Rahmen</text><g transform="translate(1184.5,173.8) scale(0.93)"><path d="M0.3,-0.3 L2.2,-3.8 L12.6,-14.2 L14.8,-12 L4.4,-1.6 Z" fill="#e2a640" stroke="#8a5a10" stroke-width="0.5"/><path d="M2.6,-4.2 L13,-14.6" stroke="#f6d488" stroke-width="0.7"/><path d="M11.6,-13.2 L13.2,-14.8 Q14,-15.5 14.8,-14.8 L15.4,-14.2 Q16.1,-13.4 15.4,-12.6 L13.8,-11 Z" fill="#e42020"/><path d="M0,0 L0.9,-2.2 L2.2,-0.9 Z" fill="#333"/></g><rect x="1155" y="322.4" width="300" height="1.2" fill="#b4b4b4"/><rect x="1155" y="323.6" width="300" height="22.4" fill="url(#dtb)"/><rect x="1155" y="345" width="300" height="1" fill="#c9c9c9"/><circle cx="1163.9" cy="334.2" r="6.9" fill="#6f6f6f"/><circle cx="1182" cy="334.2" r="6.9" fill="#6f6f6f"/><path d="M1161.2,331.5 L1166.6,336.9 M1166.6,331.5 L1161.2,336.9" stroke="#fff" stroke-width="1.6"/><path d="M1181,333.9 V331.4 H1186 V335.2 H1184" fill="none" stroke="#fff" stroke-width="1.1"/><rect x="1178.7" y="333.9" width="5.2" height="3.9" fill="none" stroke="#fff" stroke-width="1.1"/><text x="1322" y="339" font-family="Liberation Sans" font-size="11.8" fill="#333" text-anchor="middle">Layerliste</text><rect x="1156.35" y="347.25" width="58.22000000000003" height="24.0" fill="url(#dbg)" stroke="#9d9d9d" stroke-width="1.5"/><rect x="1216.07" y="347.25" width="58.22000000000003" height="24.0" fill="url(#dbg)" stroke="#9d9d9d" stroke-width="1.5"/><rect x="1275.79" y="347.25" width="58.22000000000003" height="24.0" fill="url(#dbg)" stroke="#9d9d9d" stroke-width="1.5"/><rect x="1335.51" y="347.25" width="58.22000000000003" height="24.0" fill="url(#dbg)" stroke="#9d9d9d" stroke-width="1.5"/><rect x="1395.23" y="347.25" width="58.22000000000003" height="24.0" fill="url(#dbg)" stroke="#9d9d9d" stroke-width="1.5"/><ellipse cx="1185.46" cy="358.8" rx="7.4" ry="5.3" fill="#000"/><ellipse cx="1185.46" cy="359.7" rx="5.0" ry="3.1" fill="#fff"/><circle cx="1185.66" cy="358.3" r="3.0" fill="#000"/><circle cx="1184.66" cy="357.5" r="0.7" fill="#888"/><ellipse cx="1245.1799999999998" cy="358.8" rx="7.4" ry="5.3" fill="#a8a8a8"/><ellipse cx="1245.1799999999998" cy="359.7" rx="5.0" ry="3.1" fill="#fff"/><circle cx="1245.3799999999999" cy="358.3" r="3.0" fill="#a8a8a8"/><circle cx="1244.3799999999999" cy="357.5" r="0.7" fill="#888"/><path d="M1298.9,358.8 h12 M1304.9,352.8 v12" stroke="#ff0000" stroke-width="2.8"/><path d="M1358.12,358.8 h13" stroke="#ff0000" stroke-width="2.8"/><g transform="translate(1416.8400000000001,366.3) scale(1.0)"><path d="M0.3,-0.3 L2.2,-3.8 L12.6,-14.2 L14.8,-12 L4.4,-1.6 Z" fill="#e2a640" stroke="#8a5a10" stroke-width="0.5"/><path d="M2.6,-4.2 L13,-14.6" stroke="#f6d488" stroke-width="0.7"/><path d="M11.6,-13.2 L13.2,-14.8 Q14,-15.5 14.8,-14.8 L15.4,-14.2 Q16.1,-13.4 15.4,-12.6 L13.8,-11 Z" fill="#e42020"/><path d="M0,0 L0.9,-2.2 L2.2,-0.9 Z" fill="#333"/></g><rect x="1155.5" y="372.5" width="298.5" height="425.5" fill="#fff"/><rect x="1155" y="372" width="299.5" height="1" fill="#bdbdbd"/><rect x="1155.5" y="393.4" width="298.5" height="19.2" fill="#0b50d6"/><rect x="1161.2" y="378.4" width="15.6" height="9.2" fill="#000" stroke="#222" stroke-width="0.8"/><text x="1183" y="386.8" font-family="Liberation Sans" font-size="13.5" fill="#111">0</text><ellipse cx="1422.8" cy="383" rx="7.03" ry="5.034999999999999" fill="#000"/><ellipse cx="1422.8" cy="383.855" rx="4.75" ry="2.945" fill="#fff"/><circle cx="1422.99" cy="382.525" r="2.8499999999999996" fill="#000"/><circle cx="1422.04" cy="381.765" r="0.6649999999999999" fill="#888"/><path d="M1441.5,383 V380.5 Q1441.5,377 1445,377 Q1448.5,377 1448.5,380.5 V383" fill="none" stroke="#b6b6b6" stroke-width="1.7"/><rect x="1440.2" y="382.4" width="9.6" height="7.3" rx="0.6" fill="#b6b6b6"/><rect x="1161.2" y="398.4" width="15.6" height="9.2" fill="#e040e0" stroke="#222" stroke-width="0.8"/><text x="1183" y="406.8" font-family="Liberation Sans" font-size="13.5" fill="#fff">Ansichtsfenster</text><ellipse cx="1422.8" cy="403" rx="7.03" ry="5.034999999999999" fill="#2a3a5a"/><ellipse cx="1422.8" cy="403.855" rx="4.75" ry="2.945" fill="#fff"/><circle cx="1422.99" cy="402.525" r="2.8499999999999996" fill="#2a3a5a"/><circle cx="1422.04" cy="401.765" r="0.6649999999999999" fill="#888"/><path d="M1441.5,403 V400.5 Q1441.5,397 1445,397 Q1448.5,397 1448.5,400.5 V403" fill="none" stroke="#a9b6d6" stroke-width="1.7"/><rect x="1440.2" y="402.4" width="9.6" height="7.3" rx="0.6" fill="#a9b6d6"/><rect x="1161.2" y="418.4" width="15.6" height="9.2" fill="#0d7f80" stroke="#222" stroke-width="0.8"/><text x="1183" y="426.8" font-family="Liberation Sans" font-size="13.5" fill="#111">Bemassungen</text><ellipse cx="1422.8" cy="423" rx="7.03" ry="5.034999999999999" fill="#000"/><ellipse cx="1422.8" cy="423.855" rx="4.75" ry="2.945" fill="#fff"/><circle cx="1422.99" cy="422.525" r="2.8499999999999996" fill="#000"/><circle cx="1422.04" cy="421.765" r="0.6649999999999999" fill="#888"/><path d="M1441.5,423 V420.5 Q1441.5,417 1445,417 Q1448.5,417 1448.5,420.5 V423" fill="none" stroke="#b6b6b6" stroke-width="1.7"/><rect x="1440.2" y="422.4" width="9.6" height="7.3" rx="0.6" fill="#b6b6b6"/><rect x="1161.2" y="438.4" width="15.6" height="9.2" fill="#fff" stroke="#222" stroke-width="0.8"/><text x="1183" y="446.8" font-family="Liberation Sans" font-size="13.5" fill="#111">Defpoints</text><ellipse cx="1422.8" cy="443" rx="7.03" ry="5.034999999999999" fill="#000"/><ellipse cx="1422.8" cy="443.855" rx="4.75" ry="2.945" fill="#fff"/><circle cx="1422.99" cy="442.525" r="2.8499999999999996" fill="#000"/><circle cx="1422.04" cy="441.765" r="0.6649999999999999" fill="#888"/><path d="M1441.5,443 V440.5 Q1441.5,437 1445,437 Q1448.5,437 1448.5,440.5 V443" fill="none" stroke="#b6b6b6" stroke-width="1.7"/><rect x="1440.2" y="442.4" width="9.6" height="7.3" rx="0.6" fill="#b6b6b6"/><rect x="1161.2" y="458.4" width="15.6" height="9.2" fill="#000" stroke="#222" stroke-width="0.8"/><text x="1183" y="466.8" font-family="Liberation Sans" font-size="13.5" fill="#111">Rahmen</text><ellipse cx="1422.8" cy="463" rx="7.03" ry="5.034999999999999" fill="#000"/><ellipse cx="1422.8" cy="463.855" rx="4.75" ry="2.945" fill="#fff"/><circle cx="1422.99" cy="462.525" r="2.8499999999999996" fill="#000"/><circle cx="1422.04" cy="461.765" r="0.6649999999999999" fill="#888"/><path d="M1441.5,463 V460.5 Q1441.5,457 1445,457 Q1448.5,457 1448.5,460.5 V463" fill="none" stroke="#b6b6b6" stroke-width="1.7"/><rect x="1440.2" y="462.4" width="9.6" height="7.3" rx="0.6" fill="#b6b6b6"/><rect x="1161.2" y="478.4" width="15.6" height="9.2" fill="#000" stroke="#222" stroke-width="0.8"/><text x="1183" y="486.8" font-family="Liberation Sans" font-size="13.5" fill="#111">Sichtbar</text><ellipse cx="1422.8" cy="483" rx="7.03" ry="5.034999999999999" fill="#000"/><ellipse cx="1422.8" cy="483.855" rx="4.75" ry="2.945" fill="#fff"/><circle cx="1422.99" cy="482.525" r="2.8499999999999996" fill="#000"/><circle cx="1422.04" cy="481.765" r="0.6649999999999999" fill="#888"/><path d="M1441.5,483 V480.5 Q1441.5,477 1445,477 Q1448.5,477 1448.5,480.5 V483" fill="none" stroke="#b6b6b6" stroke-width="1.7"/><rect x="1440.2" y="482.4" width="9.6" height="7.3" rx="0.6" fill="#b6b6b6"/><rect x="1161.2" y="498.4" width="15.6" height="9.2" fill="#f00000" stroke="#222" stroke-width="0.8"/><text x="1183" y="506.8" font-family="Liberation Sans" font-size="13.5" fill="#111">Zentrum</text><ellipse cx="1422.8" cy="503" rx="7.03" ry="5.034999999999999" fill="#000"/><ellipse cx="1422.8" cy="503.855" rx="4.75" ry="2.945" fill="#fff"/><circle cx="1422.99" cy="502.525" r="2.8499999999999996" fill="#000"/><circle cx="1422.04" cy="501.765" r="0.6649999999999999" fill="#888"/><path d="M1441.5,503 V500.5 Q1441.5,497 1445,497 Q1448.5,497 1448.5,500.5 V503" fill="none" stroke="#b6b6b6" stroke-width="1.7"/><rect x="1440.2" y="502.4" width="9.6" height="7.3" rx="0.6" fill="#b6b6b6"/><g transform="translate(1394.5,409) scale(0.95)"><path d="M0.3,-0.3 L2.2,-3.8 L12.6,-14.2 L14.8,-12 L4.4,-1.6 Z" fill="#e2a640" stroke="#8a5a10" stroke-width="0.5"/><path d="M2.6,-4.2 L13,-14.6" stroke="#f6d488" stroke-width="0.7"/><path d="M11.6,-13.2 L13.2,-14.8 Q14,-15.5 14.8,-14.8 L15.4,-14.2 Q16.1,-13.4 15.4,-12.6 L13.8,-11 Z" fill="#e42020"/><path d="M0,0 L0.9,-2.2 L2.2,-0.9 Z" fill="#333"/></g><rect x="1454" y="108" width="1" height="690" fill="#c8c8c8"/><rect x="1455" y="108" width="45" height="690" fill="url(#rtb)"/><rect x="1462.2" y="116.2" width="1.6" height="1.6" fill="#a0a0a0"/><rect x="1468.2" y="116.2" width="1.6" height="1.6" fill="#a0a0a0"/><rect x="1474.2" y="116.2" width="1.6" height="1.6" fill="#a0a0a0"/><rect x="1480.2" y="116.2" width="1.6" height="1.6" fill="#a0a0a0"/><rect x="1486.2" y="116.2" width="1.6" height="1.6" fill="#a0a0a0"/><rect x="1456.2" y="120.9" width="43" height="41.7" rx="5" fill="#bfbfbf"/><rect x="1456.2" y="167.3" width="43" height="42.2" rx="5" fill="#bfbfbf"/><rect x="1456.2" y="418.2" width="43" height="42.5" rx="5" fill="#bfbfbf"/><rect x="1457" y="262" width="1" height="1" fill="#777"/><rect x="1460" y="262" width="1" height="1" fill="#777"/><rect x="1463" y="262" width="1" height="1" fill="#777"/><rect x="1466" y="262" width="1" height="1" fill="#777"/><rect x="1469" y="262" width="1" height="1" fill="#777"/><rect x="1472" y="262" width="1" height="1" fill="#777"/><rect x="1475" y="262" width="1" height="1" fill="#777"/><rect x="1478" y="262" width="1" height="1" fill="#777"/><rect x="1481" y="262" width="1" height="1" fill="#777"/><rect x="1484" y="262" width="1" height="1" fill="#777"/><rect x="1487" y="262" width="1" height="1" fill="#777"/><rect x="1490" y="262" width="1" height="1" fill="#777"/><rect x="1493" y="262" width="1" height="1" fill="#777"/><rect x="1496" y="262" width="1" height="1" fill="#777"/><rect x="1499" y="262" width="1" height="1" fill="#777"/><rect x="1457" y="409.5" width="1" height="1" fill="#777"/><rect x="1460" y="409.5" width="1" height="1" fill="#777"/><rect x="1463" y="409.5" width="1" height="1" fill="#777"/><rect x="1466" y="409.5" width="1" height="1" fill="#777"/><rect x="1469" y="409.5" width="1" height="1" fill="#777"/><rect x="1472" y="409.5" width="1" height="1" fill="#777"/><rect x="1475" y="409.5" width="1" height="1" fill="#777"/><rect x="1478" y="409.5" width="1" height="1" fill="#777"/><rect x="1481" y="409.5" width="1" height="1" fill="#777"/><rect x="1484" y="409.5" width="1" height="1" fill="#777"/><rect x="1487" y="409.5" width="1" height="1" fill="#777"/><rect x="1490" y="409.5" width="1" height="1" fill="#777"/><rect x="1493" y="409.5" width="1" height="1" fill="#777"/><rect x="1496" y="409.5" width="1" height="1" fill="#777"/><rect x="1499" y="409.5" width="1" height="1" fill="#777"/><rect x="1464.0" y="128.0" width="27" height="27" fill="#fff" stroke="#333" stroke-width="1"/><rect x="1463.5" y="127.5" width="28" height="4.5" fill="#000"/><rect x="1465.0" y="128.5" width="2.5" height="2.5" fill="#fff"/><path d="M1470,138 l10,-3 v12 l-10,3 z" fill="#ddd" stroke="#555" stroke-width="0.7"/><path d="M1473,137.5 l10,-3 v12 l-10,3 z" fill="#eee" stroke="#555" stroke-width="0.7"/><path d="M1477,146 l4,-6" stroke="#e04040" stroke-width="0.8"/><rect x="1464.0" y="174.5" width="27" height="27" fill="#fff" stroke="#333" stroke-width="1"/><rect x="1463.5" y="174" width="28" height="4.5" fill="#000"/><rect x="1465.0" y="175" width="2.5" height="2.5" fill="#fff"/><rect x="1469" y="182" width="10" height="8" fill="#f5e6b0" stroke="#555" stroke-width="0.8"/><circle cx="1480" cy="191" r="4.5" fill="none" stroke="#555" stroke-width="0.8"/><rect x="1464.0" y="221.5" width="27" height="27" fill="#fff" stroke="#333" stroke-width="1"/><rect x="1463.5" y="221" width="28" height="4.5" fill="#000"/><rect x="1465.0" y="222" width="2.5" height="2.5" fill="#fff"/><rect x="1468" y="230" width="18" height="11" rx="2" fill="#f0f4ff" stroke="#aab8dd" stroke-width="0.8"/><rect x="1464.0" y="277.5" width="27" height="27" fill="#fff" stroke="#333" stroke-width="1"/><rect x="1463.5" y="277" width="28" height="4.5" fill="#000"/><rect x="1465.0" y="278" width="2.5" height="2.5" fill="#fff"/><rect x="1467" y="284" width="3" height="3" fill="#000"/><rect x="1472" y="284" width="14" height="3" fill="none" stroke="#333" stroke-width="0.6"/><rect x="1467" y="290" width="3" height="3" fill="#000"/><rect x="1472" y="290" width="14" height="3" fill="none" stroke="#333" stroke-width="0.6"/><rect x="1467" y="296" width="3" height="3" fill="#000"/><rect x="1472" y="296" width="14" height="3" fill="none" stroke="#333" stroke-width="0.6"/><rect x="1464.0" y="323.5" width="27" height="27" fill="#fff" stroke="#333" stroke-width="1"/><rect x="1463.5" y="323" width="28" height="4.5" fill="#000"/><rect x="1465.0" y="324" width="2.5" height="2.5" fill="#fff"/><path d="M1469,332 h17 l-6.5,7 v8 l-4,2 v-10 z" fill="#ddd" stroke="#333" stroke-width="0.8"/><rect x="1464.0" y="370.0" width="27" height="27" fill="#fff" stroke="#333" stroke-width="1"/><rect x="1463.5" y="369.5" width="28" height="4.5" fill="#000"/><rect x="1465.0" y="370.5" width="2.5" height="2.5" fill="#fff"/><path d="M1470,376 v18 l7,-4 v-10 z" fill="#fff" stroke="#333" stroke-width="0.8"/><rect x="1477" y="381" width="9" height="8" rx="2" fill="#777"/><path d="M1466,385 h21" stroke="#f88" stroke-width="0.5" stroke-dasharray="1,1"/><rect x="1464.0" y="425.2" width="27" height="27" fill="#fff" stroke="#333" stroke-width="1"/><rect x="1463.5" y="424.7" width="28" height="4.5" fill="#000"/><rect x="1465.0" y="425.7" width="2.5" height="2.5" fill="#fff"/><rect x="1467" y="432.0" width="12" height="0.6" fill="#888"/><rect x="1467" y="435.3" width="12" height="0.6" fill="#888"/><rect x="1467" y="438.6" width="12" height="0.6" fill="#888"/><rect x="1467" y="441.9" width="12" height="0.6" fill="#888"/><rect x="1467" y="445.2" width="8" height="0.6" fill="#888"/><rect x="1465" y="446" width="24" height="5" fill="#fff" stroke="#333" stroke-width="0.5"/><rect x="1464.0" y="472.1" width="27" height="27" fill="#fff" stroke="#333" stroke-width="1"/><rect x="1463.5" y="471.6" width="28" height="4.5" fill="#000"/><rect x="1465.0" y="472.6" width="2.5" height="2.5" fill="#fff"/><rect x="1471" y="479" width="12" height="15" fill="#c68a2a"/><rect x="1472.5" y="480.5" width="9" height="12" fill="#f4f4f4"/><rect x="1474" y="477.5" width="6" height="3" fill="#888"/></svg>
<div class="a" style="left:0;top:797.7px;width:1500px;height:46.3px;background:#dcdcdc"></div><div class="t" style="left:1.8px;top:808px;font-size:10px;color:#222;letter-spacing:0.15px">79.8208,130.3145</div><div class="t" style="left:1.8px;top:828px;font-size:10px;color:#222;letter-spacing:0.15px">@-0.1792,0.3145</div><div class="a" style="left:253px;top:802px;width:1px;height:40px;background:#888"></div><div class="t" style="left:255.8px;top:808px;font-size:10px;color:#222;letter-spacing:0.15px">152.8176&lt;59°</div><div class="t" style="left:255.8px;top:828px;font-size:10px;color:#222;letter-spacing:0.15px">@0.362&lt;120°</div><div class="a" style="left:506px;top:819px;width:6px;height:6px;border-radius:3px;background:#c4c4c4"></div><div class="t" style="left:626.7px;top:818px;font-size:10px;color:#222;letter-spacing:0.15px">Erster Eckpunkt</div><svg class="a" style="left:716px;top:805px" width="21" height="32" viewBox="716 805 21 32">
<rect x="717.3" y="806.3" width="17.5" height="29.3" rx="8.7" fill="#fff" stroke="#333" stroke-width="0.9"/>
<path d="M717.5,819.5 Q726,817.5 734.5,819.5" fill="none" stroke="#333" stroke-width="0.9"/>
<rect x="724.6" y="808.5" width="3" height="7.5" rx="1.5" fill="#fff" stroke="#333" stroke-width="0.8"/>
<line x1="726.1" y1="816" x2="726.1" y2="818.5" stroke="#333" stroke-width="0.8"/>
</svg><div class="t" style="left:754.4px;top:818px;font-size:10px;color:#222;letter-spacing:0.15px">Abbrechen</div><div class="a" style="left:939px;top:819px;width:6px;height:6px;border-radius:3px;background:#c4c4c4"></div><div class="t" style="left:949.3px;top:818px;font-size:10px;color:#222;letter-spacing:0.15px">Keine Objekte selektiert.</div><div class="a" style="left:1269px;top:819px;width:6px;height:6px;border-radius:3px;background:#c4c4c4"></div>
</body></html>
